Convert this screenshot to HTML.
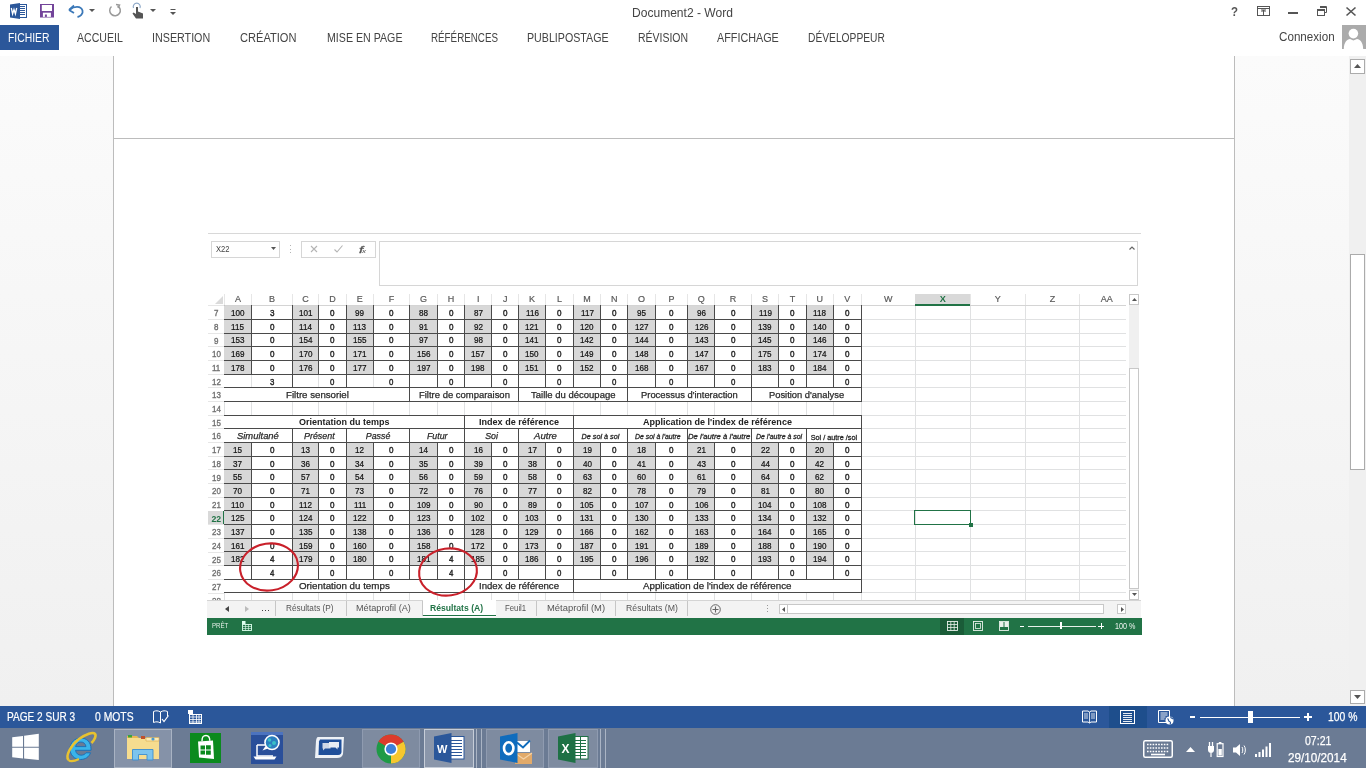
<!DOCTYPE html>
<html><head><meta charset="utf-8"><style>
html,body{margin:0;padding:0;}
body{width:1366px;height:768px;position:relative;overflow:hidden;background:#fff;font-family:"Liberation Sans",sans-serif;}
.a{position:absolute;}
.t{position:absolute;-webkit-font-smoothing:antialiased;white-space:nowrap;line-height:1;transform-origin:0 0;}
svg{position:absolute;overflow:visible;}
</style></head><body><div style="position:absolute;left:0;top:0;width:1366px;height:768px;will-change:transform;">
<div class="a" style="left:0;top:56px;width:1349px;height:650px;background:linear-gradient(#fbfbfb,#f0f0f0);"></div>
<div class="a" style="left:114.00px;top:56.00px;width:1120.00px;height:650.00px;background:#fff;"></div>
<div class="a" style="left:113.00px;top:56.00px;width:1.00px;height:650.00px;background:#bcbcbc;"></div>
<div class="a" style="left:1234.00px;top:56.00px;width:1.00px;height:650.00px;background:#bcbcbc;"></div>
<div class="a" style="left:113.00px;top:138.00px;width:1121.00px;height:1.00px;background:#bcbcbc;"></div>
<div class="a" style="left:0.00px;top:0.00px;width:1366.00px;height:56.00px;background:#fff;"></div>
<div class="t" style="left:631.50px;top:5.86px;font-size:13.04px;color:#444;transform:scaleX(0.9247);">Document2 - Word</div>
<div class="a" style="left:0.00px;top:25.00px;width:59.00px;height:25.00px;background:#2b579a;"></div>
<div class="t" style="left:8.30px;top:31.24px;font-size:13.19px;color:#fff;transform:scaleX(0.7867);">FICHIER</div>
<div class="t" style="left:76.50px;top:31.24px;font-size:13.19px;color:#444;transform:scaleX(0.8012);">ACCUEIL</div>
<div class="t" style="left:152.30px;top:31.24px;font-size:13.19px;color:#444;transform:scaleX(0.8132);">INSERTION</div>
<div class="t" style="left:240.10px;top:31.24px;font-size:13.19px;color:#444;transform:scaleX(0.8412);">CRÉATION</div>
<div class="t" style="left:326.50px;top:31.24px;font-size:13.19px;color:#444;transform:scaleX(0.8069);">MISE EN PAGE</div>
<div class="t" style="left:431.10px;top:31.24px;font-size:13.19px;color:#444;transform:scaleX(0.7433);">RÉFÉRENCES</div>
<div class="t" style="left:527.00px;top:31.24px;font-size:13.19px;color:#444;transform:scaleX(0.8087);">PUBLIPOSTAGE</div>
<div class="t" style="left:637.90px;top:31.24px;font-size:13.19px;color:#444;transform:scaleX(0.7949);">RÉVISION</div>
<div class="t" style="left:717.00px;top:31.24px;font-size:13.19px;color:#444;transform:scaleX(0.8188);">AFFICHAGE</div>
<div class="t" style="left:808.10px;top:31.24px;font-size:13.19px;color:#444;transform:scaleX(0.7772);">DÉVELOPPEUR</div>
<div class="t" style="left:1278.70px;top:30.49px;font-size:13.48px;color:#444;transform:scaleX(0.8643);">Connexion</div>
<svg style="left:1342px;top:25px" width="24" height="24" viewBox="0 0 24 24">
<rect x="0" y="0" width="24" height="24" fill="#ababab"/>
<circle cx="11.4" cy="8.6" r="4.8" fill="#fff"/>
<path d="M1.8 24 C2 17 5 14.5 8 14 L11.4 15.5 L15 14 C18 14.5 21 17 21.2 24 Z" fill="#fff"/>
</svg>
<svg style="left:10px;top:3px" width="17" height="16" viewBox="0 0 17 16" shape-rendering="crispEdges">
<rect x="8" y="1" width="8" height="13" fill="#fff" stroke="#2b579a" stroke-width="1"/>
<path d="M10 3.5H15M10 5.5H15M10 7.5H15M10 9.5H15M10 11.5H15" stroke="#2b579a" stroke-width="1"/>
<path d="M0 1.5 L10 0 V16 L0 14.5 Z" fill="#2b579a" shape-rendering="auto"/>
<path d="M1.3 5 L2.6 11 L4 6.5 L5.4 11 L6.7 5" fill="none" stroke="#fff" stroke-width="1.3" shape-rendering="auto"/>
</svg>
<svg style="left:40px;top:4px" width="14" height="14" viewBox="0 0 14 14">
<rect x="0" y="0" width="14" height="13.5" fill="#73449a"/>
<rect x="1.8" y="1" width="10.2" height="6" fill="#fff"/>
<rect x="2.9" y="8.7" width="8" height="4.2" fill="#fff"/>
<rect x="4.9" y="10.5" width="2" height="2.4" fill="#73449a"/>
</svg>
<svg style="left:68px;top:4px" width="17" height="14" viewBox="0 0 17 14">
<path d="M2 5.5 C6 2 13 1.5 14.5 6.5 C15.5 10 12 12.5 9.5 13" fill="none" stroke="#3b78b8" stroke-width="1.8"/>
<path d="M1 6 L6 1.5 M1 6 L6 9" fill="none" stroke="#3b78b8" stroke-width="1.8"/>
</svg>
<svg style="left:89px;top:9px" width="6" height="3" viewBox="0 0 6 3"><path d="M0 0H6L3 3Z" fill="#555"/></svg>
<svg style="left:108px;top:4px" width="14" height="13" viewBox="0 0 14 13">
<path d="M9.5 1.8 A5.3 5.3 0 1 1 3.5 2.5" fill="none" stroke="#9a9a9a" stroke-width="1.5"/>
<path d="M8 0.5 L11.5 1 L10 4" fill="none" stroke="#9a9a9a" stroke-width="1.5"/>
</svg>
<svg style="left:131px;top:3px" width="14" height="16" viewBox="0 0 14 16">
<path d="M2.5 5 A3.5 3.5 0 1 1 9 5" fill="none" stroke="#8fa9c8" stroke-width="1.2"/>
<path d="M5 4 V11 L2.5 9.5 L1.5 10.5 L5 15.5 H12 V10.5 L7 8.5 V4 Z" fill="#555"/>
</svg>
<svg style="left:150px;top:9px" width="6" height="3" viewBox="0 0 6 3"><path d="M0 0H6L3 3Z" fill="#555"/></svg>
<svg style="left:170px;top:9px" width="6" height="6" viewBox="0 0 6 6"><path d="M0.5 0.5H5.5" stroke="#555"/><path d="M0 3H6L3 6Z" fill="#555"/></svg>
<div class="t" style="left:1231.00px;top:4.76px;font-size:13.04px;color:#555;font-weight:bold;transform:scaleX(0.8785);">?</div>
<svg style="left:1257px;top:6px" width="13" height="10" viewBox="0 0 13 10">
<rect x="0.5" y="0.5" width="12" height="9" fill="none" stroke="#555" stroke-width="1"/>
<path d="M0.5 2.5H12.5" stroke="#555"/>
<path d="M6.5 4V9 M4.5 6L6.5 4L8.5 6" fill="none" stroke="#555"/>
<path d="M4 4H9" stroke="#555"/>
</svg>
<div class="a" style="left:1288.00px;top:12.00px;width:9.50px;height:2.00px;background:#555;"></div>
<svg style="left:1317px;top:6px" width="10" height="10" viewBox="0 0 10 10">
<path d="M3 0.5H9.5V6.5H8" fill="none" stroke="#555"/>
<rect x="0.5" y="3.5" width="7" height="6" fill="none" stroke="#555"/>
<path d="M0.5 4.5H7.5M3 1.5H9.5" stroke="#555"/>
</svg>
<svg style="left:1346px;top:6.5px" width="10" height="9" viewBox="0 0 10 9">
<path d="M0.5 0.5L9.5 8.5M9.5 0.5L0.5 8.5" stroke="#555" stroke-width="1.6"/>
</svg>
<div class="a" style="left:1349.00px;top:56.00px;width:17.00px;height:650.00px;background:#f0f0f0;"></div>
<div class="a" style="left:1350.00px;top:59.00px;width:15.00px;height:15.00px;background:#fff;border:1px solid #ababab;box-sizing:border-box;"></div>
<svg style="left:1354px;top:64px" width="7" height="4" viewBox="0 0 7 4"><path d="M0 4H7L3.5 0Z" fill="#555"/></svg>
<div class="a" style="left:1350.00px;top:254.00px;width:15.00px;height:216.00px;background:#fff;border:1px solid #ababab;box-sizing:border-box;"></div>
<div class="a" style="left:1350.00px;top:690.00px;width:15.00px;height:14.00px;background:#fff;border:1px solid #ababab;box-sizing:border-box;"></div>
<svg style="left:1354px;top:695px" width="7" height="4" viewBox="0 0 7 4"><path d="M0 0H7L3.5 4Z" fill="#555"/></svg>
<div class="a" style="left:0.00px;top:706.00px;width:1366.00px;height:22.00px;background:#2b579a;"></div>
<div class="t" style="left:7.30px;top:710.73px;font-size:12.61px;color:#fff;transform:scaleX(0.7999);-webkit-text-stroke:0.2px #fff;">PAGE 2 SUR 3</div>
<div class="t" style="left:95.20px;top:710.73px;font-size:12.61px;color:#fff;transform:scaleX(0.8223);-webkit-text-stroke:0.2px #fff;">0 MOTS</div>
<svg style="left:153px;top:710px" width="16" height="14" viewBox="0 0 16 14">
<path d="M0.5 1.5 C3 0.5 5 0.5 7.5 2 V13 C5 11.5 3 11.5 0.5 12.5 Z" fill="none" stroke="#fff"/>
<path d="M7.5 2 C10 0.5 12 0.5 14.5 1.5 V6" fill="none" stroke="#fff"/>
<path d="M9 9 L11 11.5 L15.5 5.5" fill="none" stroke="#fff" stroke-width="1.2"/>
</svg>
<svg style="left:188px;top:710px" width="14" height="14" viewBox="0 0 14 14">
<rect x="0" y="0" width="5" height="4" fill="#fff"/>
<rect x="1.5" y="4.5" width="12" height="9" fill="none" stroke="#fff"/>
<path d="M1.5 7H13.5M1.5 9.5H13.5M1.5 12H13.5M5 4.5V13.5M8.5 4.5V13.5M11 4.5V13.5" stroke="#fff" stroke-width="0.8"/>
</svg>
<svg style="left:1082px;top:710px" width="15" height="14" viewBox="0 0 15 14">
<path d="M0.5 1 H6 L7.5 2 L9 1 H14.5 V12 H9 L7.5 13 L6 12 H0.5 Z" fill="none" stroke="#fff"/>
<path d="M7.5 2V13 M2 4H6M2 6H6M2 8H6M9 4H13M9 6H13M9 8H13" stroke="#fff" stroke-width="0.8"/>
</svg>
<div class="a" style="left:1109.00px;top:706.00px;width:38.00px;height:22.00px;background:#1e4e8c;"></div>
<svg style="left:1120px;top:710px" width="15" height="14" viewBox="0 0 15 14">
<rect x="0.5" y="0.5" width="14" height="13" fill="none" stroke="#fff"/>
<path d="M3 3.5H12M3 5.5H12M3 7.5H12M3 9.5H12M3 11.5H12" stroke="#fff" stroke-width="0.9"/>
</svg>
<svg style="left:1158px;top:710px" width="16" height="15" viewBox="0 0 16 15">
<path d="M9 12.5H0.5V0.5H11.5V7" fill="none" stroke="#fff"/>
<path d="M2.5 3H9.5M2.5 5H9.5M2.5 7H7.5M2.5 9H6.5" stroke="#fff" stroke-width="0.9"/>
<circle cx="11.5" cy="10.5" r="4" fill="#fff"/>
<path d="M9.5 8.5 C11 9.5 10 11 11.5 11.5 C13 12 12.5 13.5 12 14.3 M12.5 6.8 C12.5 8 13.8 8.5 15.2 9" fill="none" stroke="#2b579a" stroke-width="1.1"/>
</svg>
<div class="a" style="left:1190.00px;top:716.00px;width:5.00px;height:2.00px;background:#fff;"></div>
<div class="a" style="left:1200.00px;top:716.50px;width:100.00px;height:1.00px;background:#fff;"></div>
<div class="a" style="left:1247.50px;top:711.00px;width:5.00px;height:12.00px;background:#fff;"></div>
<div class="a" style="left:1304.00px;top:716.00px;width:8.00px;height:2.00px;background:#fff;"></div>
<div class="a" style="left:1307.00px;top:713.00px;width:2.00px;height:8.00px;background:#fff;"></div>
<div class="t" style="left:1327.60px;top:710.73px;font-size:12.61px;color:#fff;transform:scaleX(0.8223);-webkit-text-stroke:0.25px #fff;">100 %</div>
<div class="a" style="left:0.00px;top:728.00px;width:1366.00px;height:40.00px;background:#6b7b94;"></div>
<div class="a" style="left:208.00px;top:233.00px;width:933.00px;height:1.00px;background:#d8d8d8;"></div>
<div class="a" style="left:210.50px;top:240.50px;width:69.50px;height:17.50px;background:#fff;border:1px solid #d6d6d6;box-sizing:border-box;"></div>
<div class="t" style="left:215.60px;top:244.99px;font-size:8.99px;color:#444;transform:scaleX(0.8444);">X22</div>
<svg style="left:271px;top:247px" width="5" height="3" viewBox="0 0 5 3"><path d="M0 0H5L2.5 3Z" fill="#555"/></svg>
<div class="a" style="left:289.50px;top:245.00px;width:1.20px;height:1.20px;background:#b4b4b4;"></div>
<div class="a" style="left:289.50px;top:248.50px;width:1.20px;height:1.20px;background:#b4b4b4;"></div>
<div class="a" style="left:289.50px;top:252.00px;width:1.20px;height:1.20px;background:#b4b4b4;"></div>
<div class="a" style="left:301.00px;top:240.50px;width:75.00px;height:17.50px;background:#fff;border:1px solid #d6d6d6;box-sizing:border-box;"></div>
<svg style="left:310px;top:245px" width="8" height="8" viewBox="0 0 8 8"><path d="M1 1L7 7M7 1L1 7" stroke="#b4b4b4" stroke-width="1.1"/></svg>
<svg style="left:334px;top:245px" width="9" height="8" viewBox="0 0 9 8"><path d="M0.5 4.5L3 7L8.5 0.5" fill="none" stroke="#b4b4b4" stroke-width="1.1"/></svg>
<div class="t" style="left:358.60px;top:245.16px;font-size:9.86px;color:#555;font-style:italic;transform:scaleX(1.5340);-webkit-text-stroke:0.3px #555;">f</div>
<div class="t" style="left:362.20px;top:248.59px;font-size:5.80px;color:#444;font-style:italic;transform:scaleX(1.3800);">x</div>
<div class="a" style="left:378.50px;top:240.50px;width:759.50px;height:45.00px;background:#fff;border:1px solid #d6d6d6;box-sizing:border-box;"></div>
<svg style="left:1129px;top:246px" width="6" height="4" viewBox="0 0 6 4"><path d="M0.5 3.5L3 1L5.5 3.5" fill="none" stroke="#666" stroke-width="1.2"/></svg>
<div class="a" style="left:208px;top:288px;width:918.30px;height:311.80px;overflow:hidden;">
<div class="a" style="left:-208px;top:-288px;width:1366px;height:768px;">
<div class="a" style="left:224.30px;top:305.20px;width:902.00px;height:1.00px;background:#e0e1e2;"></div>
<div class="a" style="left:224.30px;top:318.88px;width:902.00px;height:1.00px;background:#e0e1e2;"></div>
<div class="a" style="left:224.30px;top:332.56px;width:902.00px;height:1.00px;background:#e0e1e2;"></div>
<div class="a" style="left:224.30px;top:346.24px;width:902.00px;height:1.00px;background:#e0e1e2;"></div>
<div class="a" style="left:224.30px;top:359.92px;width:902.00px;height:1.00px;background:#e0e1e2;"></div>
<div class="a" style="left:224.30px;top:373.60px;width:902.00px;height:1.00px;background:#e0e1e2;"></div>
<div class="a" style="left:224.30px;top:387.28px;width:902.00px;height:1.00px;background:#e0e1e2;"></div>
<div class="a" style="left:224.30px;top:400.96px;width:902.00px;height:1.00px;background:#e0e1e2;"></div>
<div class="a" style="left:224.30px;top:414.64px;width:902.00px;height:1.00px;background:#e0e1e2;"></div>
<div class="a" style="left:224.30px;top:428.32px;width:902.00px;height:1.00px;background:#e0e1e2;"></div>
<div class="a" style="left:224.30px;top:442.00px;width:902.00px;height:1.00px;background:#e0e1e2;"></div>
<div class="a" style="left:224.30px;top:455.68px;width:902.00px;height:1.00px;background:#e0e1e2;"></div>
<div class="a" style="left:224.30px;top:469.36px;width:902.00px;height:1.00px;background:#e0e1e2;"></div>
<div class="a" style="left:224.30px;top:483.04px;width:902.00px;height:1.00px;background:#e0e1e2;"></div>
<div class="a" style="left:224.30px;top:496.72px;width:902.00px;height:1.00px;background:#e0e1e2;"></div>
<div class="a" style="left:224.30px;top:510.40px;width:902.00px;height:1.00px;background:#e0e1e2;"></div>
<div class="a" style="left:224.30px;top:524.08px;width:902.00px;height:1.00px;background:#e0e1e2;"></div>
<div class="a" style="left:224.30px;top:537.76px;width:902.00px;height:1.00px;background:#e0e1e2;"></div>
<div class="a" style="left:224.30px;top:551.44px;width:902.00px;height:1.00px;background:#e0e1e2;"></div>
<div class="a" style="left:224.30px;top:565.12px;width:902.00px;height:1.00px;background:#e0e1e2;"></div>
<div class="a" style="left:224.30px;top:578.80px;width:902.00px;height:1.00px;background:#e0e1e2;"></div>
<div class="a" style="left:224.30px;top:592.48px;width:902.00px;height:1.00px;background:#e0e1e2;"></div>
<div class="a" style="left:224.30px;top:606.16px;width:902.00px;height:1.00px;background:#e0e1e2;"></div>
<div class="a" style="left:223.80px;top:293.50px;width:1.00px;height:306.30px;background:#e0e1e2;"></div>
<div class="a" style="left:251.00px;top:293.50px;width:1.00px;height:306.30px;background:#e0e1e2;"></div>
<div class="a" style="left:291.80px;top:293.50px;width:1.00px;height:306.30px;background:#e0e1e2;"></div>
<div class="a" style="left:318.30px;top:293.50px;width:1.00px;height:306.30px;background:#e0e1e2;"></div>
<div class="a" style="left:345.90px;top:293.50px;width:1.00px;height:306.30px;background:#e0e1e2;"></div>
<div class="a" style="left:372.50px;top:293.50px;width:1.00px;height:306.30px;background:#e0e1e2;"></div>
<div class="a" style="left:409.30px;top:293.50px;width:1.00px;height:306.30px;background:#e0e1e2;"></div>
<div class="a" style="left:436.70px;top:293.50px;width:1.00px;height:306.30px;background:#e0e1e2;"></div>
<div class="a" style="left:464.10px;top:293.50px;width:1.00px;height:306.30px;background:#e0e1e2;"></div>
<div class="a" style="left:491.20px;top:293.50px;width:1.00px;height:306.30px;background:#e0e1e2;"></div>
<div class="a" style="left:518.10px;top:293.50px;width:1.00px;height:306.30px;background:#e0e1e2;"></div>
<div class="a" style="left:545.10px;top:293.50px;width:1.00px;height:306.30px;background:#e0e1e2;"></div>
<div class="a" style="left:572.80px;top:293.50px;width:1.00px;height:306.30px;background:#e0e1e2;"></div>
<div class="a" style="left:600.20px;top:293.50px;width:1.00px;height:306.30px;background:#e0e1e2;"></div>
<div class="a" style="left:627.10px;top:293.50px;width:1.00px;height:306.30px;background:#e0e1e2;"></div>
<div class="a" style="left:654.80px;top:293.50px;width:1.00px;height:306.30px;background:#e0e1e2;"></div>
<div class="a" style="left:687.30px;top:293.50px;width:1.00px;height:306.30px;background:#e0e1e2;"></div>
<div class="a" style="left:714.20px;top:293.50px;width:1.00px;height:306.30px;background:#e0e1e2;"></div>
<div class="a" style="left:750.90px;top:293.50px;width:1.00px;height:306.30px;background:#e0e1e2;"></div>
<div class="a" style="left:778.30px;top:293.50px;width:1.00px;height:306.30px;background:#e0e1e2;"></div>
<div class="a" style="left:805.70px;top:293.50px;width:1.00px;height:306.30px;background:#e0e1e2;"></div>
<div class="a" style="left:832.90px;top:293.50px;width:1.00px;height:306.30px;background:#e0e1e2;"></div>
<div class="a" style="left:860.80px;top:293.50px;width:1.00px;height:306.30px;background:#e0e1e2;"></div>
<div class="a" style="left:914.70px;top:293.50px;width:1.00px;height:306.30px;background:#e0e1e2;"></div>
<div class="a" style="left:969.90px;top:293.50px;width:1.00px;height:306.30px;background:#e0e1e2;"></div>
<div class="a" style="left:1024.80px;top:293.50px;width:1.00px;height:306.30px;background:#e0e1e2;"></div>
<div class="a" style="left:1079.00px;top:293.50px;width:1.00px;height:306.30px;background:#e0e1e2;"></div>
<div class="a" style="left:1133.50px;top:293.50px;width:1.00px;height:306.30px;background:#e0e1e2;"></div>
<div class="a" style="left:208.00px;top:293.50px;width:918.30px;height:11.90px;background:#fff;"></div>
<div class="a" style="left:223.80px;top:293.50px;width:1.00px;height:11.90px;background:#e6e6e6;"></div>
<div class="a" style="left:251.00px;top:293.50px;width:1.00px;height:11.90px;background:#e6e6e6;"></div>
<div class="a" style="left:291.80px;top:293.50px;width:1.00px;height:11.90px;background:#e6e6e6;"></div>
<div class="a" style="left:318.30px;top:293.50px;width:1.00px;height:11.90px;background:#e6e6e6;"></div>
<div class="a" style="left:345.90px;top:293.50px;width:1.00px;height:11.90px;background:#e6e6e6;"></div>
<div class="a" style="left:372.50px;top:293.50px;width:1.00px;height:11.90px;background:#e6e6e6;"></div>
<div class="a" style="left:409.30px;top:293.50px;width:1.00px;height:11.90px;background:#e6e6e6;"></div>
<div class="a" style="left:436.70px;top:293.50px;width:1.00px;height:11.90px;background:#e6e6e6;"></div>
<div class="a" style="left:464.10px;top:293.50px;width:1.00px;height:11.90px;background:#e6e6e6;"></div>
<div class="a" style="left:491.20px;top:293.50px;width:1.00px;height:11.90px;background:#e6e6e6;"></div>
<div class="a" style="left:518.10px;top:293.50px;width:1.00px;height:11.90px;background:#e6e6e6;"></div>
<div class="a" style="left:545.10px;top:293.50px;width:1.00px;height:11.90px;background:#e6e6e6;"></div>
<div class="a" style="left:572.80px;top:293.50px;width:1.00px;height:11.90px;background:#e6e6e6;"></div>
<div class="a" style="left:600.20px;top:293.50px;width:1.00px;height:11.90px;background:#e6e6e6;"></div>
<div class="a" style="left:627.10px;top:293.50px;width:1.00px;height:11.90px;background:#e6e6e6;"></div>
<div class="a" style="left:654.80px;top:293.50px;width:1.00px;height:11.90px;background:#e6e6e6;"></div>
<div class="a" style="left:687.30px;top:293.50px;width:1.00px;height:11.90px;background:#e6e6e6;"></div>
<div class="a" style="left:714.20px;top:293.50px;width:1.00px;height:11.90px;background:#e6e6e6;"></div>
<div class="a" style="left:750.90px;top:293.50px;width:1.00px;height:11.90px;background:#e6e6e6;"></div>
<div class="a" style="left:778.30px;top:293.50px;width:1.00px;height:11.90px;background:#e6e6e6;"></div>
<div class="a" style="left:805.70px;top:293.50px;width:1.00px;height:11.90px;background:#e6e6e6;"></div>
<div class="a" style="left:832.90px;top:293.50px;width:1.00px;height:11.90px;background:#e6e6e6;"></div>
<div class="a" style="left:860.80px;top:293.50px;width:1.00px;height:11.90px;background:#e6e6e6;"></div>
<div class="a" style="left:914.70px;top:293.50px;width:1.00px;height:11.90px;background:#e6e6e6;"></div>
<div class="a" style="left:969.90px;top:293.50px;width:1.00px;height:11.90px;background:#e6e6e6;"></div>
<div class="a" style="left:1024.80px;top:293.50px;width:1.00px;height:11.90px;background:#e6e6e6;"></div>
<div class="a" style="left:1079.00px;top:293.50px;width:1.00px;height:11.90px;background:#e6e6e6;"></div>
<div class="a" style="left:208.00px;top:305.00px;width:918.30px;height:0.80px;background:#d4d4d4;"></div>
<svg style="left:214.5px;top:296px" width="8" height="8" viewBox="0 0 8 8"><path d="M8 0V8H0Z" fill="#dadada"/></svg>
<div class="a" style="left:915.20px;top:293.50px;width:55.20px;height:11.90px;background:#d9d9d9;"></div>
<div class="a" style="left:915.20px;top:304.20px;width:55.20px;height:1.40px;background:#217346;"></div>
<div class="t" style="left:234.90px;top:294.79px;font-size:8.99px;color:#5a5a5a;-webkit-text-stroke:0.2px #5a5a5a;">A</div>
<div class="t" style="left:268.90px;top:294.79px;font-size:8.99px;color:#5a5a5a;-webkit-text-stroke:0.2px #5a5a5a;">B</div>
<div class="t" style="left:302.31px;top:294.79px;font-size:8.99px;color:#5a5a5a;-webkit-text-stroke:0.2px #5a5a5a;">C</div>
<div class="t" style="left:329.36px;top:294.79px;font-size:8.99px;color:#5a5a5a;-webkit-text-stroke:0.2px #5a5a5a;">D</div>
<div class="t" style="left:356.70px;top:294.79px;font-size:8.99px;color:#5a5a5a;-webkit-text-stroke:0.2px #5a5a5a;">E</div>
<div class="t" style="left:388.66px;top:294.79px;font-size:8.99px;color:#5a5a5a;-webkit-text-stroke:0.2px #5a5a5a;">F</div>
<div class="t" style="left:420.01px;top:294.79px;font-size:8.99px;color:#5a5a5a;-webkit-text-stroke:0.2px #5a5a5a;">G</div>
<div class="t" style="left:447.66px;top:294.79px;font-size:8.99px;color:#5a5a5a;-webkit-text-stroke:0.2px #5a5a5a;">H</div>
<div class="t" style="left:476.90px;top:294.79px;font-size:8.99px;color:#5a5a5a;-webkit-text-stroke:0.2px #5a5a5a;">I</div>
<div class="t" style="left:502.90px;top:294.79px;font-size:8.99px;color:#5a5a5a;-webkit-text-stroke:0.2px #5a5a5a;">J</div>
<div class="t" style="left:529.10px;top:294.79px;font-size:8.99px;color:#5a5a5a;-webkit-text-stroke:0.2px #5a5a5a;">K</div>
<div class="t" style="left:556.95px;top:294.79px;font-size:8.99px;color:#5a5a5a;-webkit-text-stroke:0.2px #5a5a5a;">L</div>
<div class="t" style="left:583.26px;top:294.79px;font-size:8.99px;color:#5a5a5a;-webkit-text-stroke:0.2px #5a5a5a;">M</div>
<div class="t" style="left:610.91px;top:294.79px;font-size:8.99px;color:#5a5a5a;-webkit-text-stroke:0.2px #5a5a5a;">N</div>
<div class="t" style="left:637.96px;top:294.79px;font-size:8.99px;color:#5a5a5a;-webkit-text-stroke:0.2px #5a5a5a;">O</div>
<div class="t" style="left:668.55px;top:294.79px;font-size:8.99px;color:#5a5a5a;-webkit-text-stroke:0.2px #5a5a5a;">P</div>
<div class="t" style="left:697.76px;top:294.79px;font-size:8.99px;color:#5a5a5a;-webkit-text-stroke:0.2px #5a5a5a;">Q</div>
<div class="t" style="left:729.81px;top:294.79px;font-size:8.99px;color:#5a5a5a;-webkit-text-stroke:0.2px #5a5a5a;">R</div>
<div class="t" style="left:762.10px;top:294.79px;font-size:8.99px;color:#5a5a5a;-webkit-text-stroke:0.2px #5a5a5a;">S</div>
<div class="t" style="left:789.76px;top:294.79px;font-size:8.99px;color:#5a5a5a;-webkit-text-stroke:0.2px #5a5a5a;">T</div>
<div class="t" style="left:816.56px;top:294.79px;font-size:8.99px;color:#5a5a5a;-webkit-text-stroke:0.2px #5a5a5a;">U</div>
<div class="t" style="left:844.35px;top:294.79px;font-size:8.99px;color:#5a5a5a;-webkit-text-stroke:0.2px #5a5a5a;">V</div>
<div class="t" style="left:884.01px;top:294.79px;font-size:8.99px;color:#5a5a5a;-webkit-text-stroke:0.2px #5a5a5a;">W</div>
<div class="t" style="left:939.75px;top:294.67px;font-size:9.13px;color:#217346;font-weight:bold;">X</div>
<div class="t" style="left:994.85px;top:294.79px;font-size:8.99px;color:#5a5a5a;-webkit-text-stroke:0.2px #5a5a5a;">Y</div>
<div class="t" style="left:1049.66px;top:294.79px;font-size:8.99px;color:#5a5a5a;-webkit-text-stroke:0.2px #5a5a5a;">Z</div>
<div class="t" style="left:1100.76px;top:294.79px;font-size:8.99px;color:#5a5a5a;-webkit-text-stroke:0.2px #5a5a5a;">AA</div>
<div class="a" style="left:208.00px;top:305.40px;width:16.30px;height:294.40px;background:#fff;"></div>
<div class="a" style="left:224.00px;top:305.40px;width:1.00px;height:294.40px;background:#c4c4c4;"></div>
<div class="a" style="left:208.00px;top:305.30px;width:16.30px;height:0.80px;background:#e6e6e6;"></div>
<div class="t" style="left:214.08px;top:309.34px;font-size:8.70px;color:#707070;transform:scaleX(0.9200);-webkit-text-stroke:0.35px #707070;">7</div>
<div class="a" style="left:208.00px;top:318.98px;width:16.30px;height:0.80px;background:#e6e6e6;"></div>
<div class="t" style="left:214.08px;top:323.02px;font-size:8.70px;color:#707070;transform:scaleX(0.9200);-webkit-text-stroke:0.35px #707070;">8</div>
<div class="a" style="left:208.00px;top:332.66px;width:16.30px;height:0.80px;background:#e6e6e6;"></div>
<div class="t" style="left:214.08px;top:336.70px;font-size:8.70px;color:#707070;transform:scaleX(0.9200);-webkit-text-stroke:0.35px #707070;">9</div>
<div class="a" style="left:208.00px;top:346.34px;width:16.30px;height:0.80px;background:#e6e6e6;"></div>
<div class="t" style="left:211.85px;top:350.38px;font-size:8.70px;color:#707070;transform:scaleX(0.9200);-webkit-text-stroke:0.35px #707070;">10</div>
<div class="a" style="left:208.00px;top:360.02px;width:16.30px;height:0.80px;background:#e6e6e6;"></div>
<div class="t" style="left:212.15px;top:364.06px;font-size:8.70px;color:#707070;transform:scaleX(0.9200);-webkit-text-stroke:0.35px #707070;">11</div>
<div class="a" style="left:208.00px;top:373.70px;width:16.30px;height:0.80px;background:#e6e6e6;"></div>
<div class="t" style="left:211.85px;top:377.74px;font-size:8.70px;color:#707070;transform:scaleX(0.9200);-webkit-text-stroke:0.35px #707070;">12</div>
<div class="a" style="left:208.00px;top:387.38px;width:16.30px;height:0.80px;background:#e6e6e6;"></div>
<div class="t" style="left:211.85px;top:391.42px;font-size:8.70px;color:#707070;transform:scaleX(0.9200);-webkit-text-stroke:0.35px #707070;">13</div>
<div class="a" style="left:208.00px;top:401.06px;width:16.30px;height:0.80px;background:#e6e6e6;"></div>
<div class="t" style="left:211.85px;top:405.10px;font-size:8.70px;color:#707070;transform:scaleX(0.9200);-webkit-text-stroke:0.35px #707070;">14</div>
<div class="a" style="left:208.00px;top:414.74px;width:16.30px;height:0.80px;background:#e6e6e6;"></div>
<div class="t" style="left:211.85px;top:418.78px;font-size:8.70px;color:#707070;transform:scaleX(0.9200);-webkit-text-stroke:0.35px #707070;">15</div>
<div class="a" style="left:208.00px;top:428.42px;width:16.30px;height:0.80px;background:#e6e6e6;"></div>
<div class="t" style="left:211.85px;top:432.46px;font-size:8.70px;color:#707070;transform:scaleX(0.9200);-webkit-text-stroke:0.35px #707070;">16</div>
<div class="a" style="left:208.00px;top:442.10px;width:16.30px;height:0.80px;background:#e6e6e6;"></div>
<div class="t" style="left:211.85px;top:446.14px;font-size:8.70px;color:#707070;transform:scaleX(0.9200);-webkit-text-stroke:0.35px #707070;">17</div>
<div class="a" style="left:208.00px;top:455.78px;width:16.30px;height:0.80px;background:#e6e6e6;"></div>
<div class="t" style="left:211.85px;top:459.82px;font-size:8.70px;color:#707070;transform:scaleX(0.9200);-webkit-text-stroke:0.35px #707070;">18</div>
<div class="a" style="left:208.00px;top:469.46px;width:16.30px;height:0.80px;background:#e6e6e6;"></div>
<div class="t" style="left:211.85px;top:473.50px;font-size:8.70px;color:#707070;transform:scaleX(0.9200);-webkit-text-stroke:0.35px #707070;">19</div>
<div class="a" style="left:208.00px;top:483.14px;width:16.30px;height:0.80px;background:#e6e6e6;"></div>
<div class="t" style="left:211.85px;top:487.18px;font-size:8.70px;color:#707070;transform:scaleX(0.9200);-webkit-text-stroke:0.35px #707070;">20</div>
<div class="a" style="left:208.00px;top:496.82px;width:16.30px;height:0.80px;background:#e6e6e6;"></div>
<div class="t" style="left:211.85px;top:500.86px;font-size:8.70px;color:#707070;transform:scaleX(0.9200);-webkit-text-stroke:0.35px #707070;">21</div>
<div class="a" style="left:208.00px;top:510.50px;width:16.30px;height:0.80px;background:#e6e6e6;"></div>
<div class="a" style="left:208.00px;top:510.90px;width:16.30px;height:13.68px;background:#d9d9d9;"></div>
<div class="a" style="left:223.00px;top:510.90px;width:1.60px;height:13.68px;background:#217346;"></div>
<div class="t" style="left:211.46px;top:514.54px;font-size:8.70px;color:#217346;font-weight:bold;">22</div>
<div class="a" style="left:208.00px;top:524.18px;width:16.30px;height:0.80px;background:#e6e6e6;"></div>
<div class="t" style="left:211.85px;top:528.22px;font-size:8.70px;color:#707070;transform:scaleX(0.9200);-webkit-text-stroke:0.35px #707070;">23</div>
<div class="a" style="left:208.00px;top:537.86px;width:16.30px;height:0.80px;background:#e6e6e6;"></div>
<div class="t" style="left:211.85px;top:541.90px;font-size:8.70px;color:#707070;transform:scaleX(0.9200);-webkit-text-stroke:0.35px #707070;">24</div>
<div class="a" style="left:208.00px;top:551.54px;width:16.30px;height:0.80px;background:#e6e6e6;"></div>
<div class="t" style="left:211.85px;top:555.58px;font-size:8.70px;color:#707070;transform:scaleX(0.9200);-webkit-text-stroke:0.35px #707070;">25</div>
<div class="a" style="left:208.00px;top:565.22px;width:16.30px;height:0.80px;background:#e6e6e6;"></div>
<div class="t" style="left:211.85px;top:569.26px;font-size:8.70px;color:#707070;transform:scaleX(0.9200);-webkit-text-stroke:0.35px #707070;">26</div>
<div class="a" style="left:208.00px;top:578.90px;width:16.30px;height:0.80px;background:#e6e6e6;"></div>
<div class="t" style="left:211.85px;top:582.94px;font-size:8.70px;color:#707070;transform:scaleX(0.9200);-webkit-text-stroke:0.35px #707070;">27</div>
<div class="a" style="left:208.00px;top:592.58px;width:16.30px;height:0.80px;background:#e6e6e6;"></div>
<div class="t" style="left:211.85px;top:596.62px;font-size:8.70px;color:#707070;transform:scaleX(0.9200);-webkit-text-stroke:0.35px #707070;">28</div>
<div class="a" style="left:224.30px;top:305.70px;width:637.00px;height:287.28px;background:#fff;"></div>
<div class="a" style="left:224.30px;top:305.70px;width:27.20px;height:13.68px;background:#d8d8d8;"></div>
<div class="a" style="left:292.30px;top:305.70px;width:26.50px;height:13.68px;background:#d8d8d8;"></div>
<div class="a" style="left:346.40px;top:305.70px;width:26.60px;height:13.68px;background:#d8d8d8;"></div>
<div class="a" style="left:409.80px;top:305.70px;width:27.40px;height:13.68px;background:#d8d8d8;"></div>
<div class="a" style="left:464.60px;top:305.70px;width:27.10px;height:13.68px;background:#d8d8d8;"></div>
<div class="a" style="left:518.60px;top:305.70px;width:27.00px;height:13.68px;background:#d8d8d8;"></div>
<div class="a" style="left:573.30px;top:305.70px;width:27.40px;height:13.68px;background:#d8d8d8;"></div>
<div class="a" style="left:627.60px;top:305.70px;width:27.70px;height:13.68px;background:#d8d8d8;"></div>
<div class="a" style="left:687.80px;top:305.70px;width:26.90px;height:13.68px;background:#d8d8d8;"></div>
<div class="a" style="left:751.40px;top:305.70px;width:27.40px;height:13.68px;background:#d8d8d8;"></div>
<div class="a" style="left:806.20px;top:305.70px;width:27.20px;height:13.68px;background:#d8d8d8;"></div>
<div class="a" style="left:224.30px;top:319.38px;width:27.20px;height:13.68px;background:#d8d8d8;"></div>
<div class="a" style="left:292.30px;top:319.38px;width:26.50px;height:13.68px;background:#d8d8d8;"></div>
<div class="a" style="left:346.40px;top:319.38px;width:26.60px;height:13.68px;background:#d8d8d8;"></div>
<div class="a" style="left:409.80px;top:319.38px;width:27.40px;height:13.68px;background:#d8d8d8;"></div>
<div class="a" style="left:464.60px;top:319.38px;width:27.10px;height:13.68px;background:#d8d8d8;"></div>
<div class="a" style="left:518.60px;top:319.38px;width:27.00px;height:13.68px;background:#d8d8d8;"></div>
<div class="a" style="left:573.30px;top:319.38px;width:27.40px;height:13.68px;background:#d8d8d8;"></div>
<div class="a" style="left:627.60px;top:319.38px;width:27.70px;height:13.68px;background:#d8d8d8;"></div>
<div class="a" style="left:687.80px;top:319.38px;width:26.90px;height:13.68px;background:#d8d8d8;"></div>
<div class="a" style="left:751.40px;top:319.38px;width:27.40px;height:13.68px;background:#d8d8d8;"></div>
<div class="a" style="left:806.20px;top:319.38px;width:27.20px;height:13.68px;background:#d8d8d8;"></div>
<div class="a" style="left:224.30px;top:333.06px;width:27.20px;height:13.68px;background:#d8d8d8;"></div>
<div class="a" style="left:292.30px;top:333.06px;width:26.50px;height:13.68px;background:#d8d8d8;"></div>
<div class="a" style="left:346.40px;top:333.06px;width:26.60px;height:13.68px;background:#d8d8d8;"></div>
<div class="a" style="left:409.80px;top:333.06px;width:27.40px;height:13.68px;background:#d8d8d8;"></div>
<div class="a" style="left:464.60px;top:333.06px;width:27.10px;height:13.68px;background:#d8d8d8;"></div>
<div class="a" style="left:518.60px;top:333.06px;width:27.00px;height:13.68px;background:#d8d8d8;"></div>
<div class="a" style="left:573.30px;top:333.06px;width:27.40px;height:13.68px;background:#d8d8d8;"></div>
<div class="a" style="left:627.60px;top:333.06px;width:27.70px;height:13.68px;background:#d8d8d8;"></div>
<div class="a" style="left:687.80px;top:333.06px;width:26.90px;height:13.68px;background:#d8d8d8;"></div>
<div class="a" style="left:751.40px;top:333.06px;width:27.40px;height:13.68px;background:#d8d8d8;"></div>
<div class="a" style="left:806.20px;top:333.06px;width:27.20px;height:13.68px;background:#d8d8d8;"></div>
<div class="a" style="left:224.30px;top:346.74px;width:27.20px;height:13.68px;background:#d8d8d8;"></div>
<div class="a" style="left:292.30px;top:346.74px;width:26.50px;height:13.68px;background:#d8d8d8;"></div>
<div class="a" style="left:346.40px;top:346.74px;width:26.60px;height:13.68px;background:#d8d8d8;"></div>
<div class="a" style="left:409.80px;top:346.74px;width:27.40px;height:13.68px;background:#d8d8d8;"></div>
<div class="a" style="left:464.60px;top:346.74px;width:27.10px;height:13.68px;background:#d8d8d8;"></div>
<div class="a" style="left:518.60px;top:346.74px;width:27.00px;height:13.68px;background:#d8d8d8;"></div>
<div class="a" style="left:573.30px;top:346.74px;width:27.40px;height:13.68px;background:#d8d8d8;"></div>
<div class="a" style="left:627.60px;top:346.74px;width:27.70px;height:13.68px;background:#d8d8d8;"></div>
<div class="a" style="left:687.80px;top:346.74px;width:26.90px;height:13.68px;background:#d8d8d8;"></div>
<div class="a" style="left:751.40px;top:346.74px;width:27.40px;height:13.68px;background:#d8d8d8;"></div>
<div class="a" style="left:806.20px;top:346.74px;width:27.20px;height:13.68px;background:#d8d8d8;"></div>
<div class="a" style="left:224.30px;top:360.42px;width:27.20px;height:13.68px;background:#d8d8d8;"></div>
<div class="a" style="left:292.30px;top:360.42px;width:26.50px;height:13.68px;background:#d8d8d8;"></div>
<div class="a" style="left:346.40px;top:360.42px;width:26.60px;height:13.68px;background:#d8d8d8;"></div>
<div class="a" style="left:409.80px;top:360.42px;width:27.40px;height:13.68px;background:#d8d8d8;"></div>
<div class="a" style="left:464.60px;top:360.42px;width:27.10px;height:13.68px;background:#d8d8d8;"></div>
<div class="a" style="left:518.60px;top:360.42px;width:27.00px;height:13.68px;background:#d8d8d8;"></div>
<div class="a" style="left:573.30px;top:360.42px;width:27.40px;height:13.68px;background:#d8d8d8;"></div>
<div class="a" style="left:627.60px;top:360.42px;width:27.70px;height:13.68px;background:#d8d8d8;"></div>
<div class="a" style="left:687.80px;top:360.42px;width:26.90px;height:13.68px;background:#d8d8d8;"></div>
<div class="a" style="left:751.40px;top:360.42px;width:27.40px;height:13.68px;background:#d8d8d8;"></div>
<div class="a" style="left:806.20px;top:360.42px;width:27.20px;height:13.68px;background:#d8d8d8;"></div>
<div class="a" style="left:224.30px;top:442.50px;width:27.20px;height:13.68px;background:#d8d8d8;"></div>
<div class="a" style="left:292.30px;top:442.50px;width:26.50px;height:13.68px;background:#d8d8d8;"></div>
<div class="a" style="left:346.40px;top:442.50px;width:26.60px;height:13.68px;background:#d8d8d8;"></div>
<div class="a" style="left:409.80px;top:442.50px;width:27.40px;height:13.68px;background:#d8d8d8;"></div>
<div class="a" style="left:464.60px;top:442.50px;width:27.10px;height:13.68px;background:#d8d8d8;"></div>
<div class="a" style="left:518.60px;top:442.50px;width:27.00px;height:13.68px;background:#d8d8d8;"></div>
<div class="a" style="left:573.30px;top:442.50px;width:27.40px;height:13.68px;background:#d8d8d8;"></div>
<div class="a" style="left:627.60px;top:442.50px;width:27.70px;height:13.68px;background:#d8d8d8;"></div>
<div class="a" style="left:687.80px;top:442.50px;width:26.90px;height:13.68px;background:#d8d8d8;"></div>
<div class="a" style="left:751.40px;top:442.50px;width:27.40px;height:13.68px;background:#d8d8d8;"></div>
<div class="a" style="left:806.20px;top:442.50px;width:27.20px;height:13.68px;background:#d8d8d8;"></div>
<div class="a" style="left:224.30px;top:456.18px;width:27.20px;height:13.68px;background:#d8d8d8;"></div>
<div class="a" style="left:292.30px;top:456.18px;width:26.50px;height:13.68px;background:#d8d8d8;"></div>
<div class="a" style="left:346.40px;top:456.18px;width:26.60px;height:13.68px;background:#d8d8d8;"></div>
<div class="a" style="left:409.80px;top:456.18px;width:27.40px;height:13.68px;background:#d8d8d8;"></div>
<div class="a" style="left:464.60px;top:456.18px;width:27.10px;height:13.68px;background:#d8d8d8;"></div>
<div class="a" style="left:518.60px;top:456.18px;width:27.00px;height:13.68px;background:#d8d8d8;"></div>
<div class="a" style="left:573.30px;top:456.18px;width:27.40px;height:13.68px;background:#d8d8d8;"></div>
<div class="a" style="left:627.60px;top:456.18px;width:27.70px;height:13.68px;background:#d8d8d8;"></div>
<div class="a" style="left:687.80px;top:456.18px;width:26.90px;height:13.68px;background:#d8d8d8;"></div>
<div class="a" style="left:751.40px;top:456.18px;width:27.40px;height:13.68px;background:#d8d8d8;"></div>
<div class="a" style="left:806.20px;top:456.18px;width:27.20px;height:13.68px;background:#d8d8d8;"></div>
<div class="a" style="left:224.30px;top:469.86px;width:27.20px;height:13.68px;background:#d8d8d8;"></div>
<div class="a" style="left:292.30px;top:469.86px;width:26.50px;height:13.68px;background:#d8d8d8;"></div>
<div class="a" style="left:346.40px;top:469.86px;width:26.60px;height:13.68px;background:#d8d8d8;"></div>
<div class="a" style="left:409.80px;top:469.86px;width:27.40px;height:13.68px;background:#d8d8d8;"></div>
<div class="a" style="left:464.60px;top:469.86px;width:27.10px;height:13.68px;background:#d8d8d8;"></div>
<div class="a" style="left:518.60px;top:469.86px;width:27.00px;height:13.68px;background:#d8d8d8;"></div>
<div class="a" style="left:573.30px;top:469.86px;width:27.40px;height:13.68px;background:#d8d8d8;"></div>
<div class="a" style="left:627.60px;top:469.86px;width:27.70px;height:13.68px;background:#d8d8d8;"></div>
<div class="a" style="left:687.80px;top:469.86px;width:26.90px;height:13.68px;background:#d8d8d8;"></div>
<div class="a" style="left:751.40px;top:469.86px;width:27.40px;height:13.68px;background:#d8d8d8;"></div>
<div class="a" style="left:806.20px;top:469.86px;width:27.20px;height:13.68px;background:#d8d8d8;"></div>
<div class="a" style="left:224.30px;top:483.54px;width:27.20px;height:13.68px;background:#d8d8d8;"></div>
<div class="a" style="left:292.30px;top:483.54px;width:26.50px;height:13.68px;background:#d8d8d8;"></div>
<div class="a" style="left:346.40px;top:483.54px;width:26.60px;height:13.68px;background:#d8d8d8;"></div>
<div class="a" style="left:409.80px;top:483.54px;width:27.40px;height:13.68px;background:#d8d8d8;"></div>
<div class="a" style="left:464.60px;top:483.54px;width:27.10px;height:13.68px;background:#d8d8d8;"></div>
<div class="a" style="left:518.60px;top:483.54px;width:27.00px;height:13.68px;background:#d8d8d8;"></div>
<div class="a" style="left:573.30px;top:483.54px;width:27.40px;height:13.68px;background:#d8d8d8;"></div>
<div class="a" style="left:627.60px;top:483.54px;width:27.70px;height:13.68px;background:#d8d8d8;"></div>
<div class="a" style="left:687.80px;top:483.54px;width:26.90px;height:13.68px;background:#d8d8d8;"></div>
<div class="a" style="left:751.40px;top:483.54px;width:27.40px;height:13.68px;background:#d8d8d8;"></div>
<div class="a" style="left:806.20px;top:483.54px;width:27.20px;height:13.68px;background:#d8d8d8;"></div>
<div class="a" style="left:224.30px;top:497.22px;width:27.20px;height:13.68px;background:#d8d8d8;"></div>
<div class="a" style="left:292.30px;top:497.22px;width:26.50px;height:13.68px;background:#d8d8d8;"></div>
<div class="a" style="left:346.40px;top:497.22px;width:26.60px;height:13.68px;background:#d8d8d8;"></div>
<div class="a" style="left:409.80px;top:497.22px;width:27.40px;height:13.68px;background:#d8d8d8;"></div>
<div class="a" style="left:464.60px;top:497.22px;width:27.10px;height:13.68px;background:#d8d8d8;"></div>
<div class="a" style="left:518.60px;top:497.22px;width:27.00px;height:13.68px;background:#d8d8d8;"></div>
<div class="a" style="left:573.30px;top:497.22px;width:27.40px;height:13.68px;background:#d8d8d8;"></div>
<div class="a" style="left:627.60px;top:497.22px;width:27.70px;height:13.68px;background:#d8d8d8;"></div>
<div class="a" style="left:687.80px;top:497.22px;width:26.90px;height:13.68px;background:#d8d8d8;"></div>
<div class="a" style="left:751.40px;top:497.22px;width:27.40px;height:13.68px;background:#d8d8d8;"></div>
<div class="a" style="left:806.20px;top:497.22px;width:27.20px;height:13.68px;background:#d8d8d8;"></div>
<div class="a" style="left:224.30px;top:510.90px;width:27.20px;height:13.68px;background:#d8d8d8;"></div>
<div class="a" style="left:292.30px;top:510.90px;width:26.50px;height:13.68px;background:#d8d8d8;"></div>
<div class="a" style="left:346.40px;top:510.90px;width:26.60px;height:13.68px;background:#d8d8d8;"></div>
<div class="a" style="left:409.80px;top:510.90px;width:27.40px;height:13.68px;background:#d8d8d8;"></div>
<div class="a" style="left:464.60px;top:510.90px;width:27.10px;height:13.68px;background:#d8d8d8;"></div>
<div class="a" style="left:518.60px;top:510.90px;width:27.00px;height:13.68px;background:#d8d8d8;"></div>
<div class="a" style="left:573.30px;top:510.90px;width:27.40px;height:13.68px;background:#d8d8d8;"></div>
<div class="a" style="left:627.60px;top:510.90px;width:27.70px;height:13.68px;background:#d8d8d8;"></div>
<div class="a" style="left:687.80px;top:510.90px;width:26.90px;height:13.68px;background:#d8d8d8;"></div>
<div class="a" style="left:751.40px;top:510.90px;width:27.40px;height:13.68px;background:#d8d8d8;"></div>
<div class="a" style="left:806.20px;top:510.90px;width:27.20px;height:13.68px;background:#d8d8d8;"></div>
<div class="a" style="left:224.30px;top:524.58px;width:27.20px;height:13.68px;background:#d8d8d8;"></div>
<div class="a" style="left:292.30px;top:524.58px;width:26.50px;height:13.68px;background:#d8d8d8;"></div>
<div class="a" style="left:346.40px;top:524.58px;width:26.60px;height:13.68px;background:#d8d8d8;"></div>
<div class="a" style="left:409.80px;top:524.58px;width:27.40px;height:13.68px;background:#d8d8d8;"></div>
<div class="a" style="left:464.60px;top:524.58px;width:27.10px;height:13.68px;background:#d8d8d8;"></div>
<div class="a" style="left:518.60px;top:524.58px;width:27.00px;height:13.68px;background:#d8d8d8;"></div>
<div class="a" style="left:573.30px;top:524.58px;width:27.40px;height:13.68px;background:#d8d8d8;"></div>
<div class="a" style="left:627.60px;top:524.58px;width:27.70px;height:13.68px;background:#d8d8d8;"></div>
<div class="a" style="left:687.80px;top:524.58px;width:26.90px;height:13.68px;background:#d8d8d8;"></div>
<div class="a" style="left:751.40px;top:524.58px;width:27.40px;height:13.68px;background:#d8d8d8;"></div>
<div class="a" style="left:806.20px;top:524.58px;width:27.20px;height:13.68px;background:#d8d8d8;"></div>
<div class="a" style="left:224.30px;top:538.26px;width:27.20px;height:13.68px;background:#d8d8d8;"></div>
<div class="a" style="left:292.30px;top:538.26px;width:26.50px;height:13.68px;background:#d8d8d8;"></div>
<div class="a" style="left:346.40px;top:538.26px;width:26.60px;height:13.68px;background:#d8d8d8;"></div>
<div class="a" style="left:409.80px;top:538.26px;width:27.40px;height:13.68px;background:#d8d8d8;"></div>
<div class="a" style="left:464.60px;top:538.26px;width:27.10px;height:13.68px;background:#d8d8d8;"></div>
<div class="a" style="left:518.60px;top:538.26px;width:27.00px;height:13.68px;background:#d8d8d8;"></div>
<div class="a" style="left:573.30px;top:538.26px;width:27.40px;height:13.68px;background:#d8d8d8;"></div>
<div class="a" style="left:627.60px;top:538.26px;width:27.70px;height:13.68px;background:#d8d8d8;"></div>
<div class="a" style="left:687.80px;top:538.26px;width:26.90px;height:13.68px;background:#d8d8d8;"></div>
<div class="a" style="left:751.40px;top:538.26px;width:27.40px;height:13.68px;background:#d8d8d8;"></div>
<div class="a" style="left:806.20px;top:538.26px;width:27.20px;height:13.68px;background:#d8d8d8;"></div>
<div class="a" style="left:224.30px;top:551.94px;width:27.20px;height:13.68px;background:#d8d8d8;"></div>
<div class="a" style="left:292.30px;top:551.94px;width:26.50px;height:13.68px;background:#d8d8d8;"></div>
<div class="a" style="left:346.40px;top:551.94px;width:26.60px;height:13.68px;background:#d8d8d8;"></div>
<div class="a" style="left:409.80px;top:551.94px;width:27.40px;height:13.68px;background:#d8d8d8;"></div>
<div class="a" style="left:464.60px;top:551.94px;width:27.10px;height:13.68px;background:#d8d8d8;"></div>
<div class="a" style="left:518.60px;top:551.94px;width:27.00px;height:13.68px;background:#d8d8d8;"></div>
<div class="a" style="left:573.30px;top:551.94px;width:27.40px;height:13.68px;background:#d8d8d8;"></div>
<div class="a" style="left:627.60px;top:551.94px;width:27.70px;height:13.68px;background:#d8d8d8;"></div>
<div class="a" style="left:687.80px;top:551.94px;width:26.90px;height:13.68px;background:#d8d8d8;"></div>
<div class="a" style="left:751.40px;top:551.94px;width:27.40px;height:13.68px;background:#d8d8d8;"></div>
<div class="a" style="left:806.20px;top:551.94px;width:27.20px;height:13.68px;background:#d8d8d8;"></div>
<div class="a" style="left:224.00px;top:401.46px;width:1.00px;height:13.68px;background:#e0e1e2;"></div>
<div class="a" style="left:251.00px;top:401.46px;width:1.00px;height:13.68px;background:#e0e1e2;"></div>
<div class="a" style="left:292.00px;top:401.46px;width:1.00px;height:13.68px;background:#e0e1e2;"></div>
<div class="a" style="left:318.00px;top:401.46px;width:1.00px;height:13.68px;background:#e0e1e2;"></div>
<div class="a" style="left:346.00px;top:401.46px;width:1.00px;height:13.68px;background:#e0e1e2;"></div>
<div class="a" style="left:373.00px;top:401.46px;width:1.00px;height:13.68px;background:#e0e1e2;"></div>
<div class="a" style="left:409.00px;top:401.46px;width:1.00px;height:13.68px;background:#e0e1e2;"></div>
<div class="a" style="left:437.00px;top:401.46px;width:1.00px;height:13.68px;background:#e0e1e2;"></div>
<div class="a" style="left:464.00px;top:401.46px;width:1.00px;height:13.68px;background:#e0e1e2;"></div>
<div class="a" style="left:491.00px;top:401.46px;width:1.00px;height:13.68px;background:#e0e1e2;"></div>
<div class="a" style="left:518.00px;top:401.46px;width:1.00px;height:13.68px;background:#e0e1e2;"></div>
<div class="a" style="left:545.00px;top:401.46px;width:1.00px;height:13.68px;background:#e0e1e2;"></div>
<div class="a" style="left:573.00px;top:401.46px;width:1.00px;height:13.68px;background:#e0e1e2;"></div>
<div class="a" style="left:600.00px;top:401.46px;width:1.00px;height:13.68px;background:#e0e1e2;"></div>
<div class="a" style="left:627.00px;top:401.46px;width:1.00px;height:13.68px;background:#e0e1e2;"></div>
<div class="a" style="left:655.00px;top:401.46px;width:1.00px;height:13.68px;background:#e0e1e2;"></div>
<div class="a" style="left:687.00px;top:401.46px;width:1.00px;height:13.68px;background:#e0e1e2;"></div>
<div class="a" style="left:714.00px;top:401.46px;width:1.00px;height:13.68px;background:#e0e1e2;"></div>
<div class="a" style="left:751.00px;top:401.46px;width:1.00px;height:13.68px;background:#e0e1e2;"></div>
<div class="a" style="left:778.00px;top:401.46px;width:1.00px;height:13.68px;background:#e0e1e2;"></div>
<div class="a" style="left:806.00px;top:401.46px;width:1.00px;height:13.68px;background:#e0e1e2;"></div>
<div class="a" style="left:833.00px;top:401.46px;width:1.00px;height:13.68px;background:#e0e1e2;"></div>
<div class="a" style="left:861.00px;top:401.46px;width:1.00px;height:13.68px;background:#e0e1e2;"></div>
<div class="a" style="left:251.00px;top:374.10px;width:1.00px;height:13.68px;background:#e0e1e2;"></div>
<div class="a" style="left:318.00px;top:374.10px;width:1.00px;height:13.68px;background:#e0e1e2;"></div>
<div class="a" style="left:373.00px;top:374.10px;width:1.00px;height:13.68px;background:#e0e1e2;"></div>
<div class="a" style="left:224.30px;top:592.98px;width:637.00px;height:6.82px;background:#fff;"></div>
<div class="a" style="left:223.80px;top:592.98px;width:1.00px;height:6.82px;background:#e0e1e2;"></div>
<div class="a" style="left:251.00px;top:592.98px;width:1.00px;height:6.82px;background:#e0e1e2;"></div>
<div class="a" style="left:291.80px;top:592.98px;width:1.00px;height:6.82px;background:#e0e1e2;"></div>
<div class="a" style="left:318.30px;top:592.98px;width:1.00px;height:6.82px;background:#e0e1e2;"></div>
<div class="a" style="left:345.90px;top:592.98px;width:1.00px;height:6.82px;background:#e0e1e2;"></div>
<div class="a" style="left:372.50px;top:592.98px;width:1.00px;height:6.82px;background:#e0e1e2;"></div>
<div class="a" style="left:409.30px;top:592.98px;width:1.00px;height:6.82px;background:#e0e1e2;"></div>
<div class="a" style="left:436.70px;top:592.98px;width:1.00px;height:6.82px;background:#e0e1e2;"></div>
<div class="a" style="left:464.10px;top:592.98px;width:1.00px;height:6.82px;background:#e0e1e2;"></div>
<div class="a" style="left:491.20px;top:592.98px;width:1.00px;height:6.82px;background:#e0e1e2;"></div>
<div class="a" style="left:518.10px;top:592.98px;width:1.00px;height:6.82px;background:#e0e1e2;"></div>
<div class="a" style="left:545.10px;top:592.98px;width:1.00px;height:6.82px;background:#e0e1e2;"></div>
<div class="a" style="left:572.80px;top:592.98px;width:1.00px;height:6.82px;background:#e0e1e2;"></div>
<div class="a" style="left:600.20px;top:592.98px;width:1.00px;height:6.82px;background:#e0e1e2;"></div>
<div class="a" style="left:627.10px;top:592.98px;width:1.00px;height:6.82px;background:#e0e1e2;"></div>
<div class="a" style="left:654.80px;top:592.98px;width:1.00px;height:6.82px;background:#e0e1e2;"></div>
<div class="a" style="left:687.30px;top:592.98px;width:1.00px;height:6.82px;background:#e0e1e2;"></div>
<div class="a" style="left:714.20px;top:592.98px;width:1.00px;height:6.82px;background:#e0e1e2;"></div>
<div class="a" style="left:750.90px;top:592.98px;width:1.00px;height:6.82px;background:#e0e1e2;"></div>
<div class="a" style="left:778.30px;top:592.98px;width:1.00px;height:6.82px;background:#e0e1e2;"></div>
<div class="a" style="left:805.70px;top:592.98px;width:1.00px;height:6.82px;background:#e0e1e2;"></div>
<div class="a" style="left:832.90px;top:592.98px;width:1.00px;height:6.82px;background:#e0e1e2;"></div>
<div class="a" style="left:860.80px;top:592.98px;width:1.00px;height:6.82px;background:#e0e1e2;"></div>
<div class="a" style="left:251.00px;top:305.00px;width:1.00px;height:15.00px;background:#4a4a4a;"></div>
<div class="a" style="left:292.00px;top:305.00px;width:1.00px;height:15.00px;background:#4a4a4a;"></div>
<div class="a" style="left:318.00px;top:305.00px;width:1.00px;height:15.00px;background:#4a4a4a;"></div>
<div class="a" style="left:346.00px;top:305.00px;width:1.00px;height:15.00px;background:#4a4a4a;"></div>
<div class="a" style="left:373.00px;top:305.00px;width:1.00px;height:15.00px;background:#4a4a4a;"></div>
<div class="a" style="left:409.00px;top:305.00px;width:1.00px;height:15.00px;background:#4a4a4a;"></div>
<div class="a" style="left:437.00px;top:305.00px;width:1.00px;height:15.00px;background:#4a4a4a;"></div>
<div class="a" style="left:464.00px;top:305.00px;width:1.00px;height:15.00px;background:#4a4a4a;"></div>
<div class="a" style="left:491.00px;top:305.00px;width:1.00px;height:15.00px;background:#4a4a4a;"></div>
<div class="a" style="left:518.00px;top:305.00px;width:1.00px;height:15.00px;background:#4a4a4a;"></div>
<div class="a" style="left:545.00px;top:305.00px;width:1.00px;height:15.00px;background:#4a4a4a;"></div>
<div class="a" style="left:573.00px;top:305.00px;width:1.00px;height:15.00px;background:#4a4a4a;"></div>
<div class="a" style="left:600.00px;top:305.00px;width:1.00px;height:15.00px;background:#4a4a4a;"></div>
<div class="a" style="left:627.00px;top:305.00px;width:1.00px;height:15.00px;background:#4a4a4a;"></div>
<div class="a" style="left:655.00px;top:305.00px;width:1.00px;height:15.00px;background:#4a4a4a;"></div>
<div class="a" style="left:687.00px;top:305.00px;width:1.00px;height:15.00px;background:#4a4a4a;"></div>
<div class="a" style="left:714.00px;top:305.00px;width:1.00px;height:15.00px;background:#4a4a4a;"></div>
<div class="a" style="left:751.00px;top:305.00px;width:1.00px;height:15.00px;background:#4a4a4a;"></div>
<div class="a" style="left:778.00px;top:305.00px;width:1.00px;height:15.00px;background:#4a4a4a;"></div>
<div class="a" style="left:806.00px;top:305.00px;width:1.00px;height:15.00px;background:#4a4a4a;"></div>
<div class="a" style="left:833.00px;top:305.00px;width:1.00px;height:15.00px;background:#4a4a4a;"></div>
<div class="a" style="left:861.00px;top:305.00px;width:1.00px;height:15.00px;background:#4a4a4a;"></div>
<div class="a" style="left:251.00px;top:319.00px;width:1.00px;height:15.00px;background:#4a4a4a;"></div>
<div class="a" style="left:292.00px;top:319.00px;width:1.00px;height:15.00px;background:#4a4a4a;"></div>
<div class="a" style="left:318.00px;top:319.00px;width:1.00px;height:15.00px;background:#4a4a4a;"></div>
<div class="a" style="left:346.00px;top:319.00px;width:1.00px;height:15.00px;background:#4a4a4a;"></div>
<div class="a" style="left:373.00px;top:319.00px;width:1.00px;height:15.00px;background:#4a4a4a;"></div>
<div class="a" style="left:409.00px;top:319.00px;width:1.00px;height:15.00px;background:#4a4a4a;"></div>
<div class="a" style="left:437.00px;top:319.00px;width:1.00px;height:15.00px;background:#4a4a4a;"></div>
<div class="a" style="left:464.00px;top:319.00px;width:1.00px;height:15.00px;background:#4a4a4a;"></div>
<div class="a" style="left:491.00px;top:319.00px;width:1.00px;height:15.00px;background:#4a4a4a;"></div>
<div class="a" style="left:518.00px;top:319.00px;width:1.00px;height:15.00px;background:#4a4a4a;"></div>
<div class="a" style="left:545.00px;top:319.00px;width:1.00px;height:15.00px;background:#4a4a4a;"></div>
<div class="a" style="left:573.00px;top:319.00px;width:1.00px;height:15.00px;background:#4a4a4a;"></div>
<div class="a" style="left:600.00px;top:319.00px;width:1.00px;height:15.00px;background:#4a4a4a;"></div>
<div class="a" style="left:627.00px;top:319.00px;width:1.00px;height:15.00px;background:#4a4a4a;"></div>
<div class="a" style="left:655.00px;top:319.00px;width:1.00px;height:15.00px;background:#4a4a4a;"></div>
<div class="a" style="left:687.00px;top:319.00px;width:1.00px;height:15.00px;background:#4a4a4a;"></div>
<div class="a" style="left:714.00px;top:319.00px;width:1.00px;height:15.00px;background:#4a4a4a;"></div>
<div class="a" style="left:751.00px;top:319.00px;width:1.00px;height:15.00px;background:#4a4a4a;"></div>
<div class="a" style="left:778.00px;top:319.00px;width:1.00px;height:15.00px;background:#4a4a4a;"></div>
<div class="a" style="left:806.00px;top:319.00px;width:1.00px;height:15.00px;background:#4a4a4a;"></div>
<div class="a" style="left:833.00px;top:319.00px;width:1.00px;height:15.00px;background:#4a4a4a;"></div>
<div class="a" style="left:861.00px;top:319.00px;width:1.00px;height:15.00px;background:#4a4a4a;"></div>
<div class="a" style="left:251.00px;top:333.00px;width:1.00px;height:14.00px;background:#4a4a4a;"></div>
<div class="a" style="left:292.00px;top:333.00px;width:1.00px;height:14.00px;background:#4a4a4a;"></div>
<div class="a" style="left:318.00px;top:333.00px;width:1.00px;height:14.00px;background:#4a4a4a;"></div>
<div class="a" style="left:346.00px;top:333.00px;width:1.00px;height:14.00px;background:#4a4a4a;"></div>
<div class="a" style="left:373.00px;top:333.00px;width:1.00px;height:14.00px;background:#4a4a4a;"></div>
<div class="a" style="left:409.00px;top:333.00px;width:1.00px;height:14.00px;background:#4a4a4a;"></div>
<div class="a" style="left:437.00px;top:333.00px;width:1.00px;height:14.00px;background:#4a4a4a;"></div>
<div class="a" style="left:464.00px;top:333.00px;width:1.00px;height:14.00px;background:#4a4a4a;"></div>
<div class="a" style="left:491.00px;top:333.00px;width:1.00px;height:14.00px;background:#4a4a4a;"></div>
<div class="a" style="left:518.00px;top:333.00px;width:1.00px;height:14.00px;background:#4a4a4a;"></div>
<div class="a" style="left:545.00px;top:333.00px;width:1.00px;height:14.00px;background:#4a4a4a;"></div>
<div class="a" style="left:573.00px;top:333.00px;width:1.00px;height:14.00px;background:#4a4a4a;"></div>
<div class="a" style="left:600.00px;top:333.00px;width:1.00px;height:14.00px;background:#4a4a4a;"></div>
<div class="a" style="left:627.00px;top:333.00px;width:1.00px;height:14.00px;background:#4a4a4a;"></div>
<div class="a" style="left:655.00px;top:333.00px;width:1.00px;height:14.00px;background:#4a4a4a;"></div>
<div class="a" style="left:687.00px;top:333.00px;width:1.00px;height:14.00px;background:#4a4a4a;"></div>
<div class="a" style="left:714.00px;top:333.00px;width:1.00px;height:14.00px;background:#4a4a4a;"></div>
<div class="a" style="left:751.00px;top:333.00px;width:1.00px;height:14.00px;background:#4a4a4a;"></div>
<div class="a" style="left:778.00px;top:333.00px;width:1.00px;height:14.00px;background:#4a4a4a;"></div>
<div class="a" style="left:806.00px;top:333.00px;width:1.00px;height:14.00px;background:#4a4a4a;"></div>
<div class="a" style="left:833.00px;top:333.00px;width:1.00px;height:14.00px;background:#4a4a4a;"></div>
<div class="a" style="left:861.00px;top:333.00px;width:1.00px;height:14.00px;background:#4a4a4a;"></div>
<div class="a" style="left:251.00px;top:346.00px;width:1.00px;height:15.00px;background:#4a4a4a;"></div>
<div class="a" style="left:292.00px;top:346.00px;width:1.00px;height:15.00px;background:#4a4a4a;"></div>
<div class="a" style="left:318.00px;top:346.00px;width:1.00px;height:15.00px;background:#4a4a4a;"></div>
<div class="a" style="left:346.00px;top:346.00px;width:1.00px;height:15.00px;background:#4a4a4a;"></div>
<div class="a" style="left:373.00px;top:346.00px;width:1.00px;height:15.00px;background:#4a4a4a;"></div>
<div class="a" style="left:409.00px;top:346.00px;width:1.00px;height:15.00px;background:#4a4a4a;"></div>
<div class="a" style="left:437.00px;top:346.00px;width:1.00px;height:15.00px;background:#4a4a4a;"></div>
<div class="a" style="left:464.00px;top:346.00px;width:1.00px;height:15.00px;background:#4a4a4a;"></div>
<div class="a" style="left:491.00px;top:346.00px;width:1.00px;height:15.00px;background:#4a4a4a;"></div>
<div class="a" style="left:518.00px;top:346.00px;width:1.00px;height:15.00px;background:#4a4a4a;"></div>
<div class="a" style="left:545.00px;top:346.00px;width:1.00px;height:15.00px;background:#4a4a4a;"></div>
<div class="a" style="left:573.00px;top:346.00px;width:1.00px;height:15.00px;background:#4a4a4a;"></div>
<div class="a" style="left:600.00px;top:346.00px;width:1.00px;height:15.00px;background:#4a4a4a;"></div>
<div class="a" style="left:627.00px;top:346.00px;width:1.00px;height:15.00px;background:#4a4a4a;"></div>
<div class="a" style="left:655.00px;top:346.00px;width:1.00px;height:15.00px;background:#4a4a4a;"></div>
<div class="a" style="left:687.00px;top:346.00px;width:1.00px;height:15.00px;background:#4a4a4a;"></div>
<div class="a" style="left:714.00px;top:346.00px;width:1.00px;height:15.00px;background:#4a4a4a;"></div>
<div class="a" style="left:751.00px;top:346.00px;width:1.00px;height:15.00px;background:#4a4a4a;"></div>
<div class="a" style="left:778.00px;top:346.00px;width:1.00px;height:15.00px;background:#4a4a4a;"></div>
<div class="a" style="left:806.00px;top:346.00px;width:1.00px;height:15.00px;background:#4a4a4a;"></div>
<div class="a" style="left:833.00px;top:346.00px;width:1.00px;height:15.00px;background:#4a4a4a;"></div>
<div class="a" style="left:861.00px;top:346.00px;width:1.00px;height:15.00px;background:#4a4a4a;"></div>
<div class="a" style="left:251.00px;top:360.00px;width:1.00px;height:15.00px;background:#4a4a4a;"></div>
<div class="a" style="left:292.00px;top:360.00px;width:1.00px;height:15.00px;background:#4a4a4a;"></div>
<div class="a" style="left:318.00px;top:360.00px;width:1.00px;height:15.00px;background:#4a4a4a;"></div>
<div class="a" style="left:346.00px;top:360.00px;width:1.00px;height:15.00px;background:#4a4a4a;"></div>
<div class="a" style="left:373.00px;top:360.00px;width:1.00px;height:15.00px;background:#4a4a4a;"></div>
<div class="a" style="left:409.00px;top:360.00px;width:1.00px;height:15.00px;background:#4a4a4a;"></div>
<div class="a" style="left:437.00px;top:360.00px;width:1.00px;height:15.00px;background:#4a4a4a;"></div>
<div class="a" style="left:464.00px;top:360.00px;width:1.00px;height:15.00px;background:#4a4a4a;"></div>
<div class="a" style="left:491.00px;top:360.00px;width:1.00px;height:15.00px;background:#4a4a4a;"></div>
<div class="a" style="left:518.00px;top:360.00px;width:1.00px;height:15.00px;background:#4a4a4a;"></div>
<div class="a" style="left:545.00px;top:360.00px;width:1.00px;height:15.00px;background:#4a4a4a;"></div>
<div class="a" style="left:573.00px;top:360.00px;width:1.00px;height:15.00px;background:#4a4a4a;"></div>
<div class="a" style="left:600.00px;top:360.00px;width:1.00px;height:15.00px;background:#4a4a4a;"></div>
<div class="a" style="left:627.00px;top:360.00px;width:1.00px;height:15.00px;background:#4a4a4a;"></div>
<div class="a" style="left:655.00px;top:360.00px;width:1.00px;height:15.00px;background:#4a4a4a;"></div>
<div class="a" style="left:687.00px;top:360.00px;width:1.00px;height:15.00px;background:#4a4a4a;"></div>
<div class="a" style="left:714.00px;top:360.00px;width:1.00px;height:15.00px;background:#4a4a4a;"></div>
<div class="a" style="left:751.00px;top:360.00px;width:1.00px;height:15.00px;background:#4a4a4a;"></div>
<div class="a" style="left:778.00px;top:360.00px;width:1.00px;height:15.00px;background:#4a4a4a;"></div>
<div class="a" style="left:806.00px;top:360.00px;width:1.00px;height:15.00px;background:#4a4a4a;"></div>
<div class="a" style="left:833.00px;top:360.00px;width:1.00px;height:15.00px;background:#4a4a4a;"></div>
<div class="a" style="left:861.00px;top:360.00px;width:1.00px;height:15.00px;background:#4a4a4a;"></div>
<div class="a" style="left:251.00px;top:442.00px;width:1.00px;height:15.00px;background:#4a4a4a;"></div>
<div class="a" style="left:292.00px;top:442.00px;width:1.00px;height:15.00px;background:#4a4a4a;"></div>
<div class="a" style="left:318.00px;top:442.00px;width:1.00px;height:15.00px;background:#4a4a4a;"></div>
<div class="a" style="left:346.00px;top:442.00px;width:1.00px;height:15.00px;background:#4a4a4a;"></div>
<div class="a" style="left:373.00px;top:442.00px;width:1.00px;height:15.00px;background:#4a4a4a;"></div>
<div class="a" style="left:409.00px;top:442.00px;width:1.00px;height:15.00px;background:#4a4a4a;"></div>
<div class="a" style="left:437.00px;top:442.00px;width:1.00px;height:15.00px;background:#4a4a4a;"></div>
<div class="a" style="left:464.00px;top:442.00px;width:1.00px;height:15.00px;background:#4a4a4a;"></div>
<div class="a" style="left:491.00px;top:442.00px;width:1.00px;height:15.00px;background:#4a4a4a;"></div>
<div class="a" style="left:518.00px;top:442.00px;width:1.00px;height:15.00px;background:#4a4a4a;"></div>
<div class="a" style="left:545.00px;top:442.00px;width:1.00px;height:15.00px;background:#4a4a4a;"></div>
<div class="a" style="left:573.00px;top:442.00px;width:1.00px;height:15.00px;background:#4a4a4a;"></div>
<div class="a" style="left:600.00px;top:442.00px;width:1.00px;height:15.00px;background:#4a4a4a;"></div>
<div class="a" style="left:627.00px;top:442.00px;width:1.00px;height:15.00px;background:#4a4a4a;"></div>
<div class="a" style="left:655.00px;top:442.00px;width:1.00px;height:15.00px;background:#4a4a4a;"></div>
<div class="a" style="left:687.00px;top:442.00px;width:1.00px;height:15.00px;background:#4a4a4a;"></div>
<div class="a" style="left:714.00px;top:442.00px;width:1.00px;height:15.00px;background:#4a4a4a;"></div>
<div class="a" style="left:751.00px;top:442.00px;width:1.00px;height:15.00px;background:#4a4a4a;"></div>
<div class="a" style="left:778.00px;top:442.00px;width:1.00px;height:15.00px;background:#4a4a4a;"></div>
<div class="a" style="left:806.00px;top:442.00px;width:1.00px;height:15.00px;background:#4a4a4a;"></div>
<div class="a" style="left:833.00px;top:442.00px;width:1.00px;height:15.00px;background:#4a4a4a;"></div>
<div class="a" style="left:861.00px;top:442.00px;width:1.00px;height:15.00px;background:#4a4a4a;"></div>
<div class="a" style="left:251.00px;top:456.00px;width:1.00px;height:14.00px;background:#4a4a4a;"></div>
<div class="a" style="left:292.00px;top:456.00px;width:1.00px;height:14.00px;background:#4a4a4a;"></div>
<div class="a" style="left:318.00px;top:456.00px;width:1.00px;height:14.00px;background:#4a4a4a;"></div>
<div class="a" style="left:346.00px;top:456.00px;width:1.00px;height:14.00px;background:#4a4a4a;"></div>
<div class="a" style="left:373.00px;top:456.00px;width:1.00px;height:14.00px;background:#4a4a4a;"></div>
<div class="a" style="left:409.00px;top:456.00px;width:1.00px;height:14.00px;background:#4a4a4a;"></div>
<div class="a" style="left:437.00px;top:456.00px;width:1.00px;height:14.00px;background:#4a4a4a;"></div>
<div class="a" style="left:464.00px;top:456.00px;width:1.00px;height:14.00px;background:#4a4a4a;"></div>
<div class="a" style="left:491.00px;top:456.00px;width:1.00px;height:14.00px;background:#4a4a4a;"></div>
<div class="a" style="left:518.00px;top:456.00px;width:1.00px;height:14.00px;background:#4a4a4a;"></div>
<div class="a" style="left:545.00px;top:456.00px;width:1.00px;height:14.00px;background:#4a4a4a;"></div>
<div class="a" style="left:573.00px;top:456.00px;width:1.00px;height:14.00px;background:#4a4a4a;"></div>
<div class="a" style="left:600.00px;top:456.00px;width:1.00px;height:14.00px;background:#4a4a4a;"></div>
<div class="a" style="left:627.00px;top:456.00px;width:1.00px;height:14.00px;background:#4a4a4a;"></div>
<div class="a" style="left:655.00px;top:456.00px;width:1.00px;height:14.00px;background:#4a4a4a;"></div>
<div class="a" style="left:687.00px;top:456.00px;width:1.00px;height:14.00px;background:#4a4a4a;"></div>
<div class="a" style="left:714.00px;top:456.00px;width:1.00px;height:14.00px;background:#4a4a4a;"></div>
<div class="a" style="left:751.00px;top:456.00px;width:1.00px;height:14.00px;background:#4a4a4a;"></div>
<div class="a" style="left:778.00px;top:456.00px;width:1.00px;height:14.00px;background:#4a4a4a;"></div>
<div class="a" style="left:806.00px;top:456.00px;width:1.00px;height:14.00px;background:#4a4a4a;"></div>
<div class="a" style="left:833.00px;top:456.00px;width:1.00px;height:14.00px;background:#4a4a4a;"></div>
<div class="a" style="left:861.00px;top:456.00px;width:1.00px;height:14.00px;background:#4a4a4a;"></div>
<div class="a" style="left:251.00px;top:469.00px;width:1.00px;height:15.00px;background:#4a4a4a;"></div>
<div class="a" style="left:292.00px;top:469.00px;width:1.00px;height:15.00px;background:#4a4a4a;"></div>
<div class="a" style="left:318.00px;top:469.00px;width:1.00px;height:15.00px;background:#4a4a4a;"></div>
<div class="a" style="left:346.00px;top:469.00px;width:1.00px;height:15.00px;background:#4a4a4a;"></div>
<div class="a" style="left:373.00px;top:469.00px;width:1.00px;height:15.00px;background:#4a4a4a;"></div>
<div class="a" style="left:409.00px;top:469.00px;width:1.00px;height:15.00px;background:#4a4a4a;"></div>
<div class="a" style="left:437.00px;top:469.00px;width:1.00px;height:15.00px;background:#4a4a4a;"></div>
<div class="a" style="left:464.00px;top:469.00px;width:1.00px;height:15.00px;background:#4a4a4a;"></div>
<div class="a" style="left:491.00px;top:469.00px;width:1.00px;height:15.00px;background:#4a4a4a;"></div>
<div class="a" style="left:518.00px;top:469.00px;width:1.00px;height:15.00px;background:#4a4a4a;"></div>
<div class="a" style="left:545.00px;top:469.00px;width:1.00px;height:15.00px;background:#4a4a4a;"></div>
<div class="a" style="left:573.00px;top:469.00px;width:1.00px;height:15.00px;background:#4a4a4a;"></div>
<div class="a" style="left:600.00px;top:469.00px;width:1.00px;height:15.00px;background:#4a4a4a;"></div>
<div class="a" style="left:627.00px;top:469.00px;width:1.00px;height:15.00px;background:#4a4a4a;"></div>
<div class="a" style="left:655.00px;top:469.00px;width:1.00px;height:15.00px;background:#4a4a4a;"></div>
<div class="a" style="left:687.00px;top:469.00px;width:1.00px;height:15.00px;background:#4a4a4a;"></div>
<div class="a" style="left:714.00px;top:469.00px;width:1.00px;height:15.00px;background:#4a4a4a;"></div>
<div class="a" style="left:751.00px;top:469.00px;width:1.00px;height:15.00px;background:#4a4a4a;"></div>
<div class="a" style="left:778.00px;top:469.00px;width:1.00px;height:15.00px;background:#4a4a4a;"></div>
<div class="a" style="left:806.00px;top:469.00px;width:1.00px;height:15.00px;background:#4a4a4a;"></div>
<div class="a" style="left:833.00px;top:469.00px;width:1.00px;height:15.00px;background:#4a4a4a;"></div>
<div class="a" style="left:861.00px;top:469.00px;width:1.00px;height:15.00px;background:#4a4a4a;"></div>
<div class="a" style="left:251.00px;top:483.00px;width:1.00px;height:15.00px;background:#4a4a4a;"></div>
<div class="a" style="left:292.00px;top:483.00px;width:1.00px;height:15.00px;background:#4a4a4a;"></div>
<div class="a" style="left:318.00px;top:483.00px;width:1.00px;height:15.00px;background:#4a4a4a;"></div>
<div class="a" style="left:346.00px;top:483.00px;width:1.00px;height:15.00px;background:#4a4a4a;"></div>
<div class="a" style="left:373.00px;top:483.00px;width:1.00px;height:15.00px;background:#4a4a4a;"></div>
<div class="a" style="left:409.00px;top:483.00px;width:1.00px;height:15.00px;background:#4a4a4a;"></div>
<div class="a" style="left:437.00px;top:483.00px;width:1.00px;height:15.00px;background:#4a4a4a;"></div>
<div class="a" style="left:464.00px;top:483.00px;width:1.00px;height:15.00px;background:#4a4a4a;"></div>
<div class="a" style="left:491.00px;top:483.00px;width:1.00px;height:15.00px;background:#4a4a4a;"></div>
<div class="a" style="left:518.00px;top:483.00px;width:1.00px;height:15.00px;background:#4a4a4a;"></div>
<div class="a" style="left:545.00px;top:483.00px;width:1.00px;height:15.00px;background:#4a4a4a;"></div>
<div class="a" style="left:573.00px;top:483.00px;width:1.00px;height:15.00px;background:#4a4a4a;"></div>
<div class="a" style="left:600.00px;top:483.00px;width:1.00px;height:15.00px;background:#4a4a4a;"></div>
<div class="a" style="left:627.00px;top:483.00px;width:1.00px;height:15.00px;background:#4a4a4a;"></div>
<div class="a" style="left:655.00px;top:483.00px;width:1.00px;height:15.00px;background:#4a4a4a;"></div>
<div class="a" style="left:687.00px;top:483.00px;width:1.00px;height:15.00px;background:#4a4a4a;"></div>
<div class="a" style="left:714.00px;top:483.00px;width:1.00px;height:15.00px;background:#4a4a4a;"></div>
<div class="a" style="left:751.00px;top:483.00px;width:1.00px;height:15.00px;background:#4a4a4a;"></div>
<div class="a" style="left:778.00px;top:483.00px;width:1.00px;height:15.00px;background:#4a4a4a;"></div>
<div class="a" style="left:806.00px;top:483.00px;width:1.00px;height:15.00px;background:#4a4a4a;"></div>
<div class="a" style="left:833.00px;top:483.00px;width:1.00px;height:15.00px;background:#4a4a4a;"></div>
<div class="a" style="left:861.00px;top:483.00px;width:1.00px;height:15.00px;background:#4a4a4a;"></div>
<div class="a" style="left:251.00px;top:497.00px;width:1.00px;height:14.00px;background:#4a4a4a;"></div>
<div class="a" style="left:292.00px;top:497.00px;width:1.00px;height:14.00px;background:#4a4a4a;"></div>
<div class="a" style="left:318.00px;top:497.00px;width:1.00px;height:14.00px;background:#4a4a4a;"></div>
<div class="a" style="left:346.00px;top:497.00px;width:1.00px;height:14.00px;background:#4a4a4a;"></div>
<div class="a" style="left:373.00px;top:497.00px;width:1.00px;height:14.00px;background:#4a4a4a;"></div>
<div class="a" style="left:409.00px;top:497.00px;width:1.00px;height:14.00px;background:#4a4a4a;"></div>
<div class="a" style="left:437.00px;top:497.00px;width:1.00px;height:14.00px;background:#4a4a4a;"></div>
<div class="a" style="left:464.00px;top:497.00px;width:1.00px;height:14.00px;background:#4a4a4a;"></div>
<div class="a" style="left:491.00px;top:497.00px;width:1.00px;height:14.00px;background:#4a4a4a;"></div>
<div class="a" style="left:518.00px;top:497.00px;width:1.00px;height:14.00px;background:#4a4a4a;"></div>
<div class="a" style="left:545.00px;top:497.00px;width:1.00px;height:14.00px;background:#4a4a4a;"></div>
<div class="a" style="left:573.00px;top:497.00px;width:1.00px;height:14.00px;background:#4a4a4a;"></div>
<div class="a" style="left:600.00px;top:497.00px;width:1.00px;height:14.00px;background:#4a4a4a;"></div>
<div class="a" style="left:627.00px;top:497.00px;width:1.00px;height:14.00px;background:#4a4a4a;"></div>
<div class="a" style="left:655.00px;top:497.00px;width:1.00px;height:14.00px;background:#4a4a4a;"></div>
<div class="a" style="left:687.00px;top:497.00px;width:1.00px;height:14.00px;background:#4a4a4a;"></div>
<div class="a" style="left:714.00px;top:497.00px;width:1.00px;height:14.00px;background:#4a4a4a;"></div>
<div class="a" style="left:751.00px;top:497.00px;width:1.00px;height:14.00px;background:#4a4a4a;"></div>
<div class="a" style="left:778.00px;top:497.00px;width:1.00px;height:14.00px;background:#4a4a4a;"></div>
<div class="a" style="left:806.00px;top:497.00px;width:1.00px;height:14.00px;background:#4a4a4a;"></div>
<div class="a" style="left:833.00px;top:497.00px;width:1.00px;height:14.00px;background:#4a4a4a;"></div>
<div class="a" style="left:861.00px;top:497.00px;width:1.00px;height:14.00px;background:#4a4a4a;"></div>
<div class="a" style="left:251.00px;top:510.00px;width:1.00px;height:15.00px;background:#4a4a4a;"></div>
<div class="a" style="left:292.00px;top:510.00px;width:1.00px;height:15.00px;background:#4a4a4a;"></div>
<div class="a" style="left:318.00px;top:510.00px;width:1.00px;height:15.00px;background:#4a4a4a;"></div>
<div class="a" style="left:346.00px;top:510.00px;width:1.00px;height:15.00px;background:#4a4a4a;"></div>
<div class="a" style="left:373.00px;top:510.00px;width:1.00px;height:15.00px;background:#4a4a4a;"></div>
<div class="a" style="left:409.00px;top:510.00px;width:1.00px;height:15.00px;background:#4a4a4a;"></div>
<div class="a" style="left:437.00px;top:510.00px;width:1.00px;height:15.00px;background:#4a4a4a;"></div>
<div class="a" style="left:464.00px;top:510.00px;width:1.00px;height:15.00px;background:#4a4a4a;"></div>
<div class="a" style="left:491.00px;top:510.00px;width:1.00px;height:15.00px;background:#4a4a4a;"></div>
<div class="a" style="left:518.00px;top:510.00px;width:1.00px;height:15.00px;background:#4a4a4a;"></div>
<div class="a" style="left:545.00px;top:510.00px;width:1.00px;height:15.00px;background:#4a4a4a;"></div>
<div class="a" style="left:573.00px;top:510.00px;width:1.00px;height:15.00px;background:#4a4a4a;"></div>
<div class="a" style="left:600.00px;top:510.00px;width:1.00px;height:15.00px;background:#4a4a4a;"></div>
<div class="a" style="left:627.00px;top:510.00px;width:1.00px;height:15.00px;background:#4a4a4a;"></div>
<div class="a" style="left:655.00px;top:510.00px;width:1.00px;height:15.00px;background:#4a4a4a;"></div>
<div class="a" style="left:687.00px;top:510.00px;width:1.00px;height:15.00px;background:#4a4a4a;"></div>
<div class="a" style="left:714.00px;top:510.00px;width:1.00px;height:15.00px;background:#4a4a4a;"></div>
<div class="a" style="left:751.00px;top:510.00px;width:1.00px;height:15.00px;background:#4a4a4a;"></div>
<div class="a" style="left:778.00px;top:510.00px;width:1.00px;height:15.00px;background:#4a4a4a;"></div>
<div class="a" style="left:806.00px;top:510.00px;width:1.00px;height:15.00px;background:#4a4a4a;"></div>
<div class="a" style="left:833.00px;top:510.00px;width:1.00px;height:15.00px;background:#4a4a4a;"></div>
<div class="a" style="left:861.00px;top:510.00px;width:1.00px;height:15.00px;background:#4a4a4a;"></div>
<div class="a" style="left:251.00px;top:524.00px;width:1.00px;height:15.00px;background:#4a4a4a;"></div>
<div class="a" style="left:292.00px;top:524.00px;width:1.00px;height:15.00px;background:#4a4a4a;"></div>
<div class="a" style="left:318.00px;top:524.00px;width:1.00px;height:15.00px;background:#4a4a4a;"></div>
<div class="a" style="left:346.00px;top:524.00px;width:1.00px;height:15.00px;background:#4a4a4a;"></div>
<div class="a" style="left:373.00px;top:524.00px;width:1.00px;height:15.00px;background:#4a4a4a;"></div>
<div class="a" style="left:409.00px;top:524.00px;width:1.00px;height:15.00px;background:#4a4a4a;"></div>
<div class="a" style="left:437.00px;top:524.00px;width:1.00px;height:15.00px;background:#4a4a4a;"></div>
<div class="a" style="left:464.00px;top:524.00px;width:1.00px;height:15.00px;background:#4a4a4a;"></div>
<div class="a" style="left:491.00px;top:524.00px;width:1.00px;height:15.00px;background:#4a4a4a;"></div>
<div class="a" style="left:518.00px;top:524.00px;width:1.00px;height:15.00px;background:#4a4a4a;"></div>
<div class="a" style="left:545.00px;top:524.00px;width:1.00px;height:15.00px;background:#4a4a4a;"></div>
<div class="a" style="left:573.00px;top:524.00px;width:1.00px;height:15.00px;background:#4a4a4a;"></div>
<div class="a" style="left:600.00px;top:524.00px;width:1.00px;height:15.00px;background:#4a4a4a;"></div>
<div class="a" style="left:627.00px;top:524.00px;width:1.00px;height:15.00px;background:#4a4a4a;"></div>
<div class="a" style="left:655.00px;top:524.00px;width:1.00px;height:15.00px;background:#4a4a4a;"></div>
<div class="a" style="left:687.00px;top:524.00px;width:1.00px;height:15.00px;background:#4a4a4a;"></div>
<div class="a" style="left:714.00px;top:524.00px;width:1.00px;height:15.00px;background:#4a4a4a;"></div>
<div class="a" style="left:751.00px;top:524.00px;width:1.00px;height:15.00px;background:#4a4a4a;"></div>
<div class="a" style="left:778.00px;top:524.00px;width:1.00px;height:15.00px;background:#4a4a4a;"></div>
<div class="a" style="left:806.00px;top:524.00px;width:1.00px;height:15.00px;background:#4a4a4a;"></div>
<div class="a" style="left:833.00px;top:524.00px;width:1.00px;height:15.00px;background:#4a4a4a;"></div>
<div class="a" style="left:861.00px;top:524.00px;width:1.00px;height:15.00px;background:#4a4a4a;"></div>
<div class="a" style="left:251.00px;top:538.00px;width:1.00px;height:14.00px;background:#4a4a4a;"></div>
<div class="a" style="left:292.00px;top:538.00px;width:1.00px;height:14.00px;background:#4a4a4a;"></div>
<div class="a" style="left:318.00px;top:538.00px;width:1.00px;height:14.00px;background:#4a4a4a;"></div>
<div class="a" style="left:346.00px;top:538.00px;width:1.00px;height:14.00px;background:#4a4a4a;"></div>
<div class="a" style="left:373.00px;top:538.00px;width:1.00px;height:14.00px;background:#4a4a4a;"></div>
<div class="a" style="left:409.00px;top:538.00px;width:1.00px;height:14.00px;background:#4a4a4a;"></div>
<div class="a" style="left:437.00px;top:538.00px;width:1.00px;height:14.00px;background:#4a4a4a;"></div>
<div class="a" style="left:464.00px;top:538.00px;width:1.00px;height:14.00px;background:#4a4a4a;"></div>
<div class="a" style="left:491.00px;top:538.00px;width:1.00px;height:14.00px;background:#4a4a4a;"></div>
<div class="a" style="left:518.00px;top:538.00px;width:1.00px;height:14.00px;background:#4a4a4a;"></div>
<div class="a" style="left:545.00px;top:538.00px;width:1.00px;height:14.00px;background:#4a4a4a;"></div>
<div class="a" style="left:573.00px;top:538.00px;width:1.00px;height:14.00px;background:#4a4a4a;"></div>
<div class="a" style="left:600.00px;top:538.00px;width:1.00px;height:14.00px;background:#4a4a4a;"></div>
<div class="a" style="left:627.00px;top:538.00px;width:1.00px;height:14.00px;background:#4a4a4a;"></div>
<div class="a" style="left:655.00px;top:538.00px;width:1.00px;height:14.00px;background:#4a4a4a;"></div>
<div class="a" style="left:687.00px;top:538.00px;width:1.00px;height:14.00px;background:#4a4a4a;"></div>
<div class="a" style="left:714.00px;top:538.00px;width:1.00px;height:14.00px;background:#4a4a4a;"></div>
<div class="a" style="left:751.00px;top:538.00px;width:1.00px;height:14.00px;background:#4a4a4a;"></div>
<div class="a" style="left:778.00px;top:538.00px;width:1.00px;height:14.00px;background:#4a4a4a;"></div>
<div class="a" style="left:806.00px;top:538.00px;width:1.00px;height:14.00px;background:#4a4a4a;"></div>
<div class="a" style="left:833.00px;top:538.00px;width:1.00px;height:14.00px;background:#4a4a4a;"></div>
<div class="a" style="left:861.00px;top:538.00px;width:1.00px;height:14.00px;background:#4a4a4a;"></div>
<div class="a" style="left:251.00px;top:551.00px;width:1.00px;height:15.00px;background:#4a4a4a;"></div>
<div class="a" style="left:292.00px;top:551.00px;width:1.00px;height:15.00px;background:#4a4a4a;"></div>
<div class="a" style="left:318.00px;top:551.00px;width:1.00px;height:15.00px;background:#4a4a4a;"></div>
<div class="a" style="left:346.00px;top:551.00px;width:1.00px;height:15.00px;background:#4a4a4a;"></div>
<div class="a" style="left:373.00px;top:551.00px;width:1.00px;height:15.00px;background:#4a4a4a;"></div>
<div class="a" style="left:409.00px;top:551.00px;width:1.00px;height:15.00px;background:#4a4a4a;"></div>
<div class="a" style="left:437.00px;top:551.00px;width:1.00px;height:15.00px;background:#4a4a4a;"></div>
<div class="a" style="left:464.00px;top:551.00px;width:1.00px;height:15.00px;background:#4a4a4a;"></div>
<div class="a" style="left:491.00px;top:551.00px;width:1.00px;height:15.00px;background:#4a4a4a;"></div>
<div class="a" style="left:518.00px;top:551.00px;width:1.00px;height:15.00px;background:#4a4a4a;"></div>
<div class="a" style="left:545.00px;top:551.00px;width:1.00px;height:15.00px;background:#4a4a4a;"></div>
<div class="a" style="left:573.00px;top:551.00px;width:1.00px;height:15.00px;background:#4a4a4a;"></div>
<div class="a" style="left:600.00px;top:551.00px;width:1.00px;height:15.00px;background:#4a4a4a;"></div>
<div class="a" style="left:627.00px;top:551.00px;width:1.00px;height:15.00px;background:#4a4a4a;"></div>
<div class="a" style="left:655.00px;top:551.00px;width:1.00px;height:15.00px;background:#4a4a4a;"></div>
<div class="a" style="left:687.00px;top:551.00px;width:1.00px;height:15.00px;background:#4a4a4a;"></div>
<div class="a" style="left:714.00px;top:551.00px;width:1.00px;height:15.00px;background:#4a4a4a;"></div>
<div class="a" style="left:751.00px;top:551.00px;width:1.00px;height:15.00px;background:#4a4a4a;"></div>
<div class="a" style="left:778.00px;top:551.00px;width:1.00px;height:15.00px;background:#4a4a4a;"></div>
<div class="a" style="left:806.00px;top:551.00px;width:1.00px;height:15.00px;background:#4a4a4a;"></div>
<div class="a" style="left:833.00px;top:551.00px;width:1.00px;height:15.00px;background:#4a4a4a;"></div>
<div class="a" style="left:861.00px;top:551.00px;width:1.00px;height:15.00px;background:#4a4a4a;"></div>
<div class="a" style="left:224.00px;top:319.00px;width:638.00px;height:1.00px;background:#4a4a4a;"></div>
<div class="a" style="left:224.00px;top:333.00px;width:638.00px;height:1.00px;background:#4a4a4a;"></div>
<div class="a" style="left:224.00px;top:346.00px;width:638.00px;height:1.00px;background:#4a4a4a;"></div>
<div class="a" style="left:224.00px;top:360.00px;width:638.00px;height:1.00px;background:#4a4a4a;"></div>
<div class="a" style="left:224.00px;top:374.00px;width:638.00px;height:1.00px;background:#4a4a4a;"></div>
<div class="a" style="left:224.00px;top:387.00px;width:638.00px;height:1.00px;background:#4a4a4a;"></div>
<div class="a" style="left:224.00px;top:401.00px;width:638.00px;height:1.00px;background:#4a4a4a;"></div>
<div class="a" style="left:224.00px;top:415.00px;width:638.00px;height:1.00px;background:#4a4a4a;"></div>
<div class="a" style="left:224.00px;top:428.00px;width:638.00px;height:1.00px;background:#4a4a4a;"></div>
<div class="a" style="left:224.00px;top:442.00px;width:638.00px;height:1.00px;background:#4a4a4a;"></div>
<div class="a" style="left:224.00px;top:456.00px;width:638.00px;height:1.00px;background:#4a4a4a;"></div>
<div class="a" style="left:224.00px;top:469.00px;width:638.00px;height:1.00px;background:#4a4a4a;"></div>
<div class="a" style="left:224.00px;top:483.00px;width:638.00px;height:1.00px;background:#4a4a4a;"></div>
<div class="a" style="left:224.00px;top:497.00px;width:638.00px;height:1.00px;background:#4a4a4a;"></div>
<div class="a" style="left:224.00px;top:510.00px;width:638.00px;height:1.00px;background:#4a4a4a;"></div>
<div class="a" style="left:224.00px;top:524.00px;width:638.00px;height:1.00px;background:#4a4a4a;"></div>
<div class="a" style="left:224.00px;top:538.00px;width:638.00px;height:1.00px;background:#4a4a4a;"></div>
<div class="a" style="left:224.00px;top:551.00px;width:638.00px;height:1.00px;background:#4a4a4a;"></div>
<div class="a" style="left:224.00px;top:565.00px;width:638.00px;height:1.00px;background:#4a4a4a;"></div>
<div class="a" style="left:224.00px;top:579.00px;width:638.00px;height:1.00px;background:#4a4a4a;"></div>
<div class="a" style="left:224.00px;top:592.00px;width:638.00px;height:1.00px;background:#4a4a4a;"></div>
<div class="a" style="left:292.00px;top:428.00px;width:1.00px;height:15.00px;background:#4a4a4a;"></div>
<div class="a" style="left:346.00px;top:428.00px;width:1.00px;height:15.00px;background:#4a4a4a;"></div>
<div class="a" style="left:409.00px;top:428.00px;width:1.00px;height:15.00px;background:#4a4a4a;"></div>
<div class="a" style="left:464.00px;top:428.00px;width:1.00px;height:15.00px;background:#4a4a4a;"></div>
<div class="a" style="left:518.00px;top:428.00px;width:1.00px;height:15.00px;background:#4a4a4a;"></div>
<div class="a" style="left:573.00px;top:428.00px;width:1.00px;height:15.00px;background:#4a4a4a;"></div>
<div class="a" style="left:627.00px;top:428.00px;width:1.00px;height:15.00px;background:#4a4a4a;"></div>
<div class="a" style="left:687.00px;top:428.00px;width:1.00px;height:15.00px;background:#4a4a4a;"></div>
<div class="a" style="left:751.00px;top:428.00px;width:1.00px;height:15.00px;background:#4a4a4a;"></div>
<div class="a" style="left:806.00px;top:428.00px;width:1.00px;height:15.00px;background:#4a4a4a;"></div>
<div class="a" style="left:861.00px;top:428.00px;width:1.00px;height:15.00px;background:#4a4a4a;"></div>
<div class="a" style="left:292.00px;top:374.00px;width:1.00px;height:14.00px;background:#4a4a4a;"></div>
<div class="a" style="left:346.00px;top:374.00px;width:1.00px;height:14.00px;background:#4a4a4a;"></div>
<div class="a" style="left:409.00px;top:374.00px;width:1.00px;height:14.00px;background:#4a4a4a;"></div>
<div class="a" style="left:437.00px;top:374.00px;width:1.00px;height:14.00px;background:#4a4a4a;"></div>
<div class="a" style="left:464.00px;top:374.00px;width:1.00px;height:14.00px;background:#4a4a4a;"></div>
<div class="a" style="left:491.00px;top:374.00px;width:1.00px;height:14.00px;background:#4a4a4a;"></div>
<div class="a" style="left:518.00px;top:374.00px;width:1.00px;height:14.00px;background:#4a4a4a;"></div>
<div class="a" style="left:545.00px;top:374.00px;width:1.00px;height:14.00px;background:#4a4a4a;"></div>
<div class="a" style="left:573.00px;top:374.00px;width:1.00px;height:14.00px;background:#4a4a4a;"></div>
<div class="a" style="left:600.00px;top:374.00px;width:1.00px;height:14.00px;background:#4a4a4a;"></div>
<div class="a" style="left:627.00px;top:374.00px;width:1.00px;height:14.00px;background:#4a4a4a;"></div>
<div class="a" style="left:655.00px;top:374.00px;width:1.00px;height:14.00px;background:#4a4a4a;"></div>
<div class="a" style="left:687.00px;top:374.00px;width:1.00px;height:14.00px;background:#4a4a4a;"></div>
<div class="a" style="left:714.00px;top:374.00px;width:1.00px;height:14.00px;background:#4a4a4a;"></div>
<div class="a" style="left:751.00px;top:374.00px;width:1.00px;height:14.00px;background:#4a4a4a;"></div>
<div class="a" style="left:778.00px;top:374.00px;width:1.00px;height:14.00px;background:#4a4a4a;"></div>
<div class="a" style="left:806.00px;top:374.00px;width:1.00px;height:14.00px;background:#4a4a4a;"></div>
<div class="a" style="left:833.00px;top:374.00px;width:1.00px;height:14.00px;background:#4a4a4a;"></div>
<div class="a" style="left:861.00px;top:374.00px;width:1.00px;height:14.00px;background:#4a4a4a;"></div>
<div class="a" style="left:251.00px;top:565.00px;width:1.00px;height:15.00px;background:#4a4a4a;"></div>
<div class="a" style="left:292.00px;top:565.00px;width:1.00px;height:15.00px;background:#4a4a4a;"></div>
<div class="a" style="left:318.00px;top:565.00px;width:1.00px;height:15.00px;background:#4a4a4a;"></div>
<div class="a" style="left:346.00px;top:565.00px;width:1.00px;height:15.00px;background:#4a4a4a;"></div>
<div class="a" style="left:373.00px;top:565.00px;width:1.00px;height:15.00px;background:#4a4a4a;"></div>
<div class="a" style="left:409.00px;top:565.00px;width:1.00px;height:15.00px;background:#4a4a4a;"></div>
<div class="a" style="left:437.00px;top:565.00px;width:1.00px;height:15.00px;background:#4a4a4a;"></div>
<div class="a" style="left:464.00px;top:565.00px;width:1.00px;height:15.00px;background:#4a4a4a;"></div>
<div class="a" style="left:491.00px;top:565.00px;width:1.00px;height:15.00px;background:#4a4a4a;"></div>
<div class="a" style="left:518.00px;top:565.00px;width:1.00px;height:15.00px;background:#4a4a4a;"></div>
<div class="a" style="left:545.00px;top:565.00px;width:1.00px;height:15.00px;background:#4a4a4a;"></div>
<div class="a" style="left:573.00px;top:565.00px;width:1.00px;height:15.00px;background:#4a4a4a;"></div>
<div class="a" style="left:600.00px;top:565.00px;width:1.00px;height:15.00px;background:#4a4a4a;"></div>
<div class="a" style="left:627.00px;top:565.00px;width:1.00px;height:15.00px;background:#4a4a4a;"></div>
<div class="a" style="left:655.00px;top:565.00px;width:1.00px;height:15.00px;background:#4a4a4a;"></div>
<div class="a" style="left:687.00px;top:565.00px;width:1.00px;height:15.00px;background:#4a4a4a;"></div>
<div class="a" style="left:714.00px;top:565.00px;width:1.00px;height:15.00px;background:#4a4a4a;"></div>
<div class="a" style="left:751.00px;top:565.00px;width:1.00px;height:15.00px;background:#4a4a4a;"></div>
<div class="a" style="left:778.00px;top:565.00px;width:1.00px;height:15.00px;background:#4a4a4a;"></div>
<div class="a" style="left:806.00px;top:565.00px;width:1.00px;height:15.00px;background:#4a4a4a;"></div>
<div class="a" style="left:833.00px;top:565.00px;width:1.00px;height:15.00px;background:#4a4a4a;"></div>
<div class="a" style="left:861.00px;top:565.00px;width:1.00px;height:15.00px;background:#4a4a4a;"></div>
<div class="a" style="left:409.00px;top:387.00px;width:1.00px;height:15.00px;background:#4a4a4a;"></div>
<div class="a" style="left:518.00px;top:387.00px;width:1.00px;height:15.00px;background:#4a4a4a;"></div>
<div class="a" style="left:627.00px;top:387.00px;width:1.00px;height:15.00px;background:#4a4a4a;"></div>
<div class="a" style="left:751.00px;top:387.00px;width:1.00px;height:15.00px;background:#4a4a4a;"></div>
<div class="a" style="left:861.00px;top:387.00px;width:1.00px;height:15.00px;background:#4a4a4a;"></div>
<div class="a" style="left:464.00px;top:415.00px;width:1.00px;height:14.00px;background:#4a4a4a;"></div>
<div class="a" style="left:573.00px;top:415.00px;width:1.00px;height:14.00px;background:#4a4a4a;"></div>
<div class="a" style="left:861.00px;top:415.00px;width:1.00px;height:14.00px;background:#4a4a4a;"></div>
<div class="a" style="left:464.00px;top:579.00px;width:1.00px;height:14.00px;background:#4a4a4a;"></div>
<div class="a" style="left:573.00px;top:579.00px;width:1.00px;height:14.00px;background:#4a4a4a;"></div>
<div class="a" style="left:861.00px;top:579.00px;width:1.00px;height:14.00px;background:#4a4a4a;"></div>
<div class="t" style="left:231.15px;top:309.09px;font-size:8.99px;color:#111;transform:scaleX(0.9000);-webkit-text-stroke:0.22px #111;">100</div>
<div class="t" style="left:269.65px;top:309.09px;font-size:8.99px;color:#2a2a2a;transform:scaleX(0.9000);-webkit-text-stroke:0.45px #2a2a2a;">3</div>
<div class="t" style="left:298.80px;top:309.09px;font-size:8.99px;color:#111;transform:scaleX(0.9000);-webkit-text-stroke:0.22px #111;">101</div>
<div class="t" style="left:330.35px;top:309.09px;font-size:8.99px;color:#2a2a2a;transform:scaleX(0.9000);-webkit-text-stroke:0.45px #2a2a2a;">0</div>
<div class="t" style="left:355.20px;top:309.09px;font-size:8.99px;color:#111;transform:scaleX(0.9000);-webkit-text-stroke:0.22px #111;">99</div>
<div class="t" style="left:389.15px;top:309.09px;font-size:8.99px;color:#2a2a2a;transform:scaleX(0.9000);-webkit-text-stroke:0.45px #2a2a2a;">0</div>
<div class="t" style="left:419.00px;top:309.09px;font-size:8.99px;color:#111;transform:scaleX(0.9000);-webkit-text-stroke:0.22px #111;">88</div>
<div class="t" style="left:448.65px;top:309.09px;font-size:8.99px;color:#2a2a2a;transform:scaleX(0.9000);-webkit-text-stroke:0.45px #2a2a2a;">0</div>
<div class="t" style="left:473.65px;top:309.09px;font-size:8.99px;color:#111;transform:scaleX(0.9000);-webkit-text-stroke:0.22px #111;">87</div>
<div class="t" style="left:502.90px;top:309.09px;font-size:8.99px;color:#2a2a2a;transform:scaleX(0.9000);-webkit-text-stroke:0.45px #2a2a2a;">0</div>
<div class="t" style="left:525.65px;top:309.09px;font-size:8.99px;color:#111;transform:scaleX(0.9000);-webkit-text-stroke:0.22px #111;">116</div>
<div class="t" style="left:557.20px;top:309.09px;font-size:8.99px;color:#2a2a2a;transform:scaleX(0.9000);-webkit-text-stroke:0.45px #2a2a2a;">0</div>
<div class="t" style="left:580.55px;top:309.09px;font-size:8.99px;color:#111;transform:scaleX(0.9000);-webkit-text-stroke:0.22px #111;">117</div>
<div class="t" style="left:611.90px;top:309.09px;font-size:8.99px;color:#2a2a2a;transform:scaleX(0.9000);-webkit-text-stroke:0.45px #2a2a2a;">0</div>
<div class="t" style="left:636.95px;top:309.09px;font-size:8.99px;color:#111;transform:scaleX(0.9000);-webkit-text-stroke:0.22px #111;">95</div>
<div class="t" style="left:669.30px;top:309.09px;font-size:8.99px;color:#2a2a2a;transform:scaleX(0.9000);-webkit-text-stroke:0.45px #2a2a2a;">0</div>
<div class="t" style="left:696.75px;top:309.09px;font-size:8.99px;color:#111;transform:scaleX(0.9000);-webkit-text-stroke:0.22px #111;">96</div>
<div class="t" style="left:730.80px;top:309.09px;font-size:8.99px;color:#2a2a2a;transform:scaleX(0.9000);-webkit-text-stroke:0.45px #2a2a2a;">0</div>
<div class="t" style="left:758.65px;top:309.09px;font-size:8.99px;color:#111;transform:scaleX(0.9000);-webkit-text-stroke:0.22px #111;">119</div>
<div class="t" style="left:790.25px;top:309.09px;font-size:8.99px;color:#2a2a2a;transform:scaleX(0.9000);-webkit-text-stroke:0.45px #2a2a2a;">0</div>
<div class="t" style="left:813.35px;top:309.09px;font-size:8.99px;color:#111;transform:scaleX(0.9000);-webkit-text-stroke:0.22px #111;">118</div>
<div class="t" style="left:845.10px;top:309.09px;font-size:8.99px;color:#2a2a2a;transform:scaleX(0.9000);-webkit-text-stroke:0.45px #2a2a2a;">0</div>
<div class="t" style="left:231.45px;top:322.77px;font-size:8.99px;color:#111;transform:scaleX(0.9000);-webkit-text-stroke:0.22px #111;">115</div>
<div class="t" style="left:269.65px;top:322.77px;font-size:8.99px;color:#2a2a2a;transform:scaleX(0.9000);-webkit-text-stroke:0.45px #2a2a2a;">0</div>
<div class="t" style="left:299.10px;top:322.77px;font-size:8.99px;color:#111;transform:scaleX(0.9000);-webkit-text-stroke:0.22px #111;">114</div>
<div class="t" style="left:330.35px;top:322.77px;font-size:8.99px;color:#2a2a2a;transform:scaleX(0.9000);-webkit-text-stroke:0.45px #2a2a2a;">0</div>
<div class="t" style="left:353.25px;top:322.77px;font-size:8.99px;color:#111;transform:scaleX(0.9000);-webkit-text-stroke:0.22px #111;">113</div>
<div class="t" style="left:389.15px;top:322.77px;font-size:8.99px;color:#2a2a2a;transform:scaleX(0.9000);-webkit-text-stroke:0.45px #2a2a2a;">0</div>
<div class="t" style="left:419.00px;top:322.77px;font-size:8.99px;color:#111;transform:scaleX(0.9000);-webkit-text-stroke:0.22px #111;">91</div>
<div class="t" style="left:448.65px;top:322.77px;font-size:8.99px;color:#2a2a2a;transform:scaleX(0.9000);-webkit-text-stroke:0.45px #2a2a2a;">0</div>
<div class="t" style="left:473.65px;top:322.77px;font-size:8.99px;color:#111;transform:scaleX(0.9000);-webkit-text-stroke:0.22px #111;">92</div>
<div class="t" style="left:502.90px;top:322.77px;font-size:8.99px;color:#2a2a2a;transform:scaleX(0.9000);-webkit-text-stroke:0.45px #2a2a2a;">0</div>
<div class="t" style="left:525.35px;top:322.77px;font-size:8.99px;color:#111;transform:scaleX(0.9000);-webkit-text-stroke:0.22px #111;">121</div>
<div class="t" style="left:557.20px;top:322.77px;font-size:8.99px;color:#2a2a2a;transform:scaleX(0.9000);-webkit-text-stroke:0.45px #2a2a2a;">0</div>
<div class="t" style="left:580.25px;top:322.77px;font-size:8.99px;color:#111;transform:scaleX(0.9000);-webkit-text-stroke:0.22px #111;">120</div>
<div class="t" style="left:611.90px;top:322.77px;font-size:8.99px;color:#2a2a2a;transform:scaleX(0.9000);-webkit-text-stroke:0.45px #2a2a2a;">0</div>
<div class="t" style="left:634.70px;top:322.77px;font-size:8.99px;color:#111;transform:scaleX(0.9000);-webkit-text-stroke:0.22px #111;">127</div>
<div class="t" style="left:669.30px;top:322.77px;font-size:8.99px;color:#2a2a2a;transform:scaleX(0.9000);-webkit-text-stroke:0.45px #2a2a2a;">0</div>
<div class="t" style="left:694.50px;top:322.77px;font-size:8.99px;color:#111;transform:scaleX(0.9000);-webkit-text-stroke:0.22px #111;">126</div>
<div class="t" style="left:730.80px;top:322.77px;font-size:8.99px;color:#2a2a2a;transform:scaleX(0.9000);-webkit-text-stroke:0.45px #2a2a2a;">0</div>
<div class="t" style="left:758.35px;top:322.77px;font-size:8.99px;color:#111;transform:scaleX(0.9000);-webkit-text-stroke:0.22px #111;">139</div>
<div class="t" style="left:790.25px;top:322.77px;font-size:8.99px;color:#2a2a2a;transform:scaleX(0.9000);-webkit-text-stroke:0.45px #2a2a2a;">0</div>
<div class="t" style="left:813.05px;top:322.77px;font-size:8.99px;color:#111;transform:scaleX(0.9000);-webkit-text-stroke:0.22px #111;">140</div>
<div class="t" style="left:845.10px;top:322.77px;font-size:8.99px;color:#2a2a2a;transform:scaleX(0.9000);-webkit-text-stroke:0.45px #2a2a2a;">0</div>
<div class="t" style="left:231.15px;top:336.45px;font-size:8.99px;color:#111;transform:scaleX(0.9000);-webkit-text-stroke:0.22px #111;">153</div>
<div class="t" style="left:269.65px;top:336.45px;font-size:8.99px;color:#2a2a2a;transform:scaleX(0.9000);-webkit-text-stroke:0.45px #2a2a2a;">0</div>
<div class="t" style="left:298.80px;top:336.45px;font-size:8.99px;color:#111;transform:scaleX(0.9000);-webkit-text-stroke:0.22px #111;">154</div>
<div class="t" style="left:330.35px;top:336.45px;font-size:8.99px;color:#2a2a2a;transform:scaleX(0.9000);-webkit-text-stroke:0.45px #2a2a2a;">0</div>
<div class="t" style="left:352.95px;top:336.45px;font-size:8.99px;color:#111;transform:scaleX(0.9000);-webkit-text-stroke:0.22px #111;">155</div>
<div class="t" style="left:389.15px;top:336.45px;font-size:8.99px;color:#2a2a2a;transform:scaleX(0.9000);-webkit-text-stroke:0.45px #2a2a2a;">0</div>
<div class="t" style="left:419.00px;top:336.45px;font-size:8.99px;color:#111;transform:scaleX(0.9000);-webkit-text-stroke:0.22px #111;">97</div>
<div class="t" style="left:448.65px;top:336.45px;font-size:8.99px;color:#2a2a2a;transform:scaleX(0.9000);-webkit-text-stroke:0.45px #2a2a2a;">0</div>
<div class="t" style="left:473.65px;top:336.45px;font-size:8.99px;color:#111;transform:scaleX(0.9000);-webkit-text-stroke:0.22px #111;">98</div>
<div class="t" style="left:502.90px;top:336.45px;font-size:8.99px;color:#2a2a2a;transform:scaleX(0.9000);-webkit-text-stroke:0.45px #2a2a2a;">0</div>
<div class="t" style="left:525.35px;top:336.45px;font-size:8.99px;color:#111;transform:scaleX(0.9000);-webkit-text-stroke:0.22px #111;">141</div>
<div class="t" style="left:557.20px;top:336.45px;font-size:8.99px;color:#2a2a2a;transform:scaleX(0.9000);-webkit-text-stroke:0.45px #2a2a2a;">0</div>
<div class="t" style="left:580.25px;top:336.45px;font-size:8.99px;color:#111;transform:scaleX(0.9000);-webkit-text-stroke:0.22px #111;">142</div>
<div class="t" style="left:611.90px;top:336.45px;font-size:8.99px;color:#2a2a2a;transform:scaleX(0.9000);-webkit-text-stroke:0.45px #2a2a2a;">0</div>
<div class="t" style="left:634.70px;top:336.45px;font-size:8.99px;color:#111;transform:scaleX(0.9000);-webkit-text-stroke:0.22px #111;">144</div>
<div class="t" style="left:669.30px;top:336.45px;font-size:8.99px;color:#2a2a2a;transform:scaleX(0.9000);-webkit-text-stroke:0.45px #2a2a2a;">0</div>
<div class="t" style="left:694.50px;top:336.45px;font-size:8.99px;color:#111;transform:scaleX(0.9000);-webkit-text-stroke:0.22px #111;">143</div>
<div class="t" style="left:730.80px;top:336.45px;font-size:8.99px;color:#2a2a2a;transform:scaleX(0.9000);-webkit-text-stroke:0.45px #2a2a2a;">0</div>
<div class="t" style="left:758.35px;top:336.45px;font-size:8.99px;color:#111;transform:scaleX(0.9000);-webkit-text-stroke:0.22px #111;">145</div>
<div class="t" style="left:790.25px;top:336.45px;font-size:8.99px;color:#2a2a2a;transform:scaleX(0.9000);-webkit-text-stroke:0.45px #2a2a2a;">0</div>
<div class="t" style="left:813.05px;top:336.45px;font-size:8.99px;color:#111;transform:scaleX(0.9000);-webkit-text-stroke:0.22px #111;">146</div>
<div class="t" style="left:845.10px;top:336.45px;font-size:8.99px;color:#2a2a2a;transform:scaleX(0.9000);-webkit-text-stroke:0.45px #2a2a2a;">0</div>
<div class="t" style="left:231.15px;top:350.13px;font-size:8.99px;color:#111;transform:scaleX(0.9000);-webkit-text-stroke:0.22px #111;">169</div>
<div class="t" style="left:269.65px;top:350.13px;font-size:8.99px;color:#2a2a2a;transform:scaleX(0.9000);-webkit-text-stroke:0.45px #2a2a2a;">0</div>
<div class="t" style="left:298.80px;top:350.13px;font-size:8.99px;color:#111;transform:scaleX(0.9000);-webkit-text-stroke:0.22px #111;">170</div>
<div class="t" style="left:330.35px;top:350.13px;font-size:8.99px;color:#2a2a2a;transform:scaleX(0.9000);-webkit-text-stroke:0.45px #2a2a2a;">0</div>
<div class="t" style="left:352.95px;top:350.13px;font-size:8.99px;color:#111;transform:scaleX(0.9000);-webkit-text-stroke:0.22px #111;">171</div>
<div class="t" style="left:389.15px;top:350.13px;font-size:8.99px;color:#2a2a2a;transform:scaleX(0.9000);-webkit-text-stroke:0.45px #2a2a2a;">0</div>
<div class="t" style="left:416.75px;top:350.13px;font-size:8.99px;color:#111;transform:scaleX(0.9000);-webkit-text-stroke:0.22px #111;">156</div>
<div class="t" style="left:448.65px;top:350.13px;font-size:8.99px;color:#2a2a2a;transform:scaleX(0.9000);-webkit-text-stroke:0.45px #2a2a2a;">0</div>
<div class="t" style="left:471.40px;top:350.13px;font-size:8.99px;color:#111;transform:scaleX(0.9000);-webkit-text-stroke:0.22px #111;">157</div>
<div class="t" style="left:502.90px;top:350.13px;font-size:8.99px;color:#2a2a2a;transform:scaleX(0.9000);-webkit-text-stroke:0.45px #2a2a2a;">0</div>
<div class="t" style="left:525.35px;top:350.13px;font-size:8.99px;color:#111;transform:scaleX(0.9000);-webkit-text-stroke:0.22px #111;">150</div>
<div class="t" style="left:557.20px;top:350.13px;font-size:8.99px;color:#2a2a2a;transform:scaleX(0.9000);-webkit-text-stroke:0.45px #2a2a2a;">0</div>
<div class="t" style="left:580.25px;top:350.13px;font-size:8.99px;color:#111;transform:scaleX(0.9000);-webkit-text-stroke:0.22px #111;">149</div>
<div class="t" style="left:611.90px;top:350.13px;font-size:8.99px;color:#2a2a2a;transform:scaleX(0.9000);-webkit-text-stroke:0.45px #2a2a2a;">0</div>
<div class="t" style="left:634.70px;top:350.13px;font-size:8.99px;color:#111;transform:scaleX(0.9000);-webkit-text-stroke:0.22px #111;">148</div>
<div class="t" style="left:669.30px;top:350.13px;font-size:8.99px;color:#2a2a2a;transform:scaleX(0.9000);-webkit-text-stroke:0.45px #2a2a2a;">0</div>
<div class="t" style="left:694.50px;top:350.13px;font-size:8.99px;color:#111;transform:scaleX(0.9000);-webkit-text-stroke:0.22px #111;">147</div>
<div class="t" style="left:730.80px;top:350.13px;font-size:8.99px;color:#2a2a2a;transform:scaleX(0.9000);-webkit-text-stroke:0.45px #2a2a2a;">0</div>
<div class="t" style="left:758.35px;top:350.13px;font-size:8.99px;color:#111;transform:scaleX(0.9000);-webkit-text-stroke:0.22px #111;">175</div>
<div class="t" style="left:790.25px;top:350.13px;font-size:8.99px;color:#2a2a2a;transform:scaleX(0.9000);-webkit-text-stroke:0.45px #2a2a2a;">0</div>
<div class="t" style="left:813.05px;top:350.13px;font-size:8.99px;color:#111;transform:scaleX(0.9000);-webkit-text-stroke:0.22px #111;">174</div>
<div class="t" style="left:845.10px;top:350.13px;font-size:8.99px;color:#2a2a2a;transform:scaleX(0.9000);-webkit-text-stroke:0.45px #2a2a2a;">0</div>
<div class="t" style="left:231.15px;top:363.81px;font-size:8.99px;color:#111;transform:scaleX(0.9000);-webkit-text-stroke:0.22px #111;">178</div>
<div class="t" style="left:269.65px;top:363.81px;font-size:8.99px;color:#2a2a2a;transform:scaleX(0.9000);-webkit-text-stroke:0.45px #2a2a2a;">0</div>
<div class="t" style="left:298.80px;top:363.81px;font-size:8.99px;color:#111;transform:scaleX(0.9000);-webkit-text-stroke:0.22px #111;">176</div>
<div class="t" style="left:330.35px;top:363.81px;font-size:8.99px;color:#2a2a2a;transform:scaleX(0.9000);-webkit-text-stroke:0.45px #2a2a2a;">0</div>
<div class="t" style="left:352.95px;top:363.81px;font-size:8.99px;color:#111;transform:scaleX(0.9000);-webkit-text-stroke:0.22px #111;">177</div>
<div class="t" style="left:389.15px;top:363.81px;font-size:8.99px;color:#2a2a2a;transform:scaleX(0.9000);-webkit-text-stroke:0.45px #2a2a2a;">0</div>
<div class="t" style="left:416.75px;top:363.81px;font-size:8.99px;color:#111;transform:scaleX(0.9000);-webkit-text-stroke:0.22px #111;">197</div>
<div class="t" style="left:448.65px;top:363.81px;font-size:8.99px;color:#2a2a2a;transform:scaleX(0.9000);-webkit-text-stroke:0.45px #2a2a2a;">0</div>
<div class="t" style="left:471.40px;top:363.81px;font-size:8.99px;color:#111;transform:scaleX(0.9000);-webkit-text-stroke:0.22px #111;">198</div>
<div class="t" style="left:502.90px;top:363.81px;font-size:8.99px;color:#2a2a2a;transform:scaleX(0.9000);-webkit-text-stroke:0.45px #2a2a2a;">0</div>
<div class="t" style="left:525.35px;top:363.81px;font-size:8.99px;color:#111;transform:scaleX(0.9000);-webkit-text-stroke:0.22px #111;">151</div>
<div class="t" style="left:557.20px;top:363.81px;font-size:8.99px;color:#2a2a2a;transform:scaleX(0.9000);-webkit-text-stroke:0.45px #2a2a2a;">0</div>
<div class="t" style="left:580.25px;top:363.81px;font-size:8.99px;color:#111;transform:scaleX(0.9000);-webkit-text-stroke:0.22px #111;">152</div>
<div class="t" style="left:611.90px;top:363.81px;font-size:8.99px;color:#2a2a2a;transform:scaleX(0.9000);-webkit-text-stroke:0.45px #2a2a2a;">0</div>
<div class="t" style="left:634.70px;top:363.81px;font-size:8.99px;color:#111;transform:scaleX(0.9000);-webkit-text-stroke:0.22px #111;">168</div>
<div class="t" style="left:669.30px;top:363.81px;font-size:8.99px;color:#2a2a2a;transform:scaleX(0.9000);-webkit-text-stroke:0.45px #2a2a2a;">0</div>
<div class="t" style="left:694.50px;top:363.81px;font-size:8.99px;color:#111;transform:scaleX(0.9000);-webkit-text-stroke:0.22px #111;">167</div>
<div class="t" style="left:730.80px;top:363.81px;font-size:8.99px;color:#2a2a2a;transform:scaleX(0.9000);-webkit-text-stroke:0.45px #2a2a2a;">0</div>
<div class="t" style="left:758.35px;top:363.81px;font-size:8.99px;color:#111;transform:scaleX(0.9000);-webkit-text-stroke:0.22px #111;">183</div>
<div class="t" style="left:790.25px;top:363.81px;font-size:8.99px;color:#2a2a2a;transform:scaleX(0.9000);-webkit-text-stroke:0.45px #2a2a2a;">0</div>
<div class="t" style="left:813.05px;top:363.81px;font-size:8.99px;color:#111;transform:scaleX(0.9000);-webkit-text-stroke:0.22px #111;">184</div>
<div class="t" style="left:845.10px;top:363.81px;font-size:8.99px;color:#2a2a2a;transform:scaleX(0.9000);-webkit-text-stroke:0.45px #2a2a2a;">0</div>
<div class="t" style="left:233.40px;top:445.89px;font-size:8.99px;color:#111;transform:scaleX(0.9000);-webkit-text-stroke:0.22px #111;">15</div>
<div class="t" style="left:269.65px;top:445.89px;font-size:8.99px;color:#2a2a2a;transform:scaleX(0.9000);-webkit-text-stroke:0.45px #2a2a2a;">0</div>
<div class="t" style="left:301.05px;top:445.89px;font-size:8.99px;color:#111;transform:scaleX(0.9000);-webkit-text-stroke:0.22px #111;">13</div>
<div class="t" style="left:330.35px;top:445.89px;font-size:8.99px;color:#2a2a2a;transform:scaleX(0.9000);-webkit-text-stroke:0.45px #2a2a2a;">0</div>
<div class="t" style="left:355.20px;top:445.89px;font-size:8.99px;color:#111;transform:scaleX(0.9000);-webkit-text-stroke:0.22px #111;">12</div>
<div class="t" style="left:389.15px;top:445.89px;font-size:8.99px;color:#2a2a2a;transform:scaleX(0.9000);-webkit-text-stroke:0.45px #2a2a2a;">0</div>
<div class="t" style="left:419.00px;top:445.89px;font-size:8.99px;color:#111;transform:scaleX(0.9000);-webkit-text-stroke:0.22px #111;">14</div>
<div class="t" style="left:448.65px;top:445.89px;font-size:8.99px;color:#2a2a2a;transform:scaleX(0.9000);-webkit-text-stroke:0.45px #2a2a2a;">0</div>
<div class="t" style="left:473.65px;top:445.89px;font-size:8.99px;color:#111;transform:scaleX(0.9000);-webkit-text-stroke:0.22px #111;">16</div>
<div class="t" style="left:502.90px;top:445.89px;font-size:8.99px;color:#2a2a2a;transform:scaleX(0.9000);-webkit-text-stroke:0.45px #2a2a2a;">0</div>
<div class="t" style="left:527.60px;top:445.89px;font-size:8.99px;color:#111;transform:scaleX(0.9000);-webkit-text-stroke:0.22px #111;">17</div>
<div class="t" style="left:557.20px;top:445.89px;font-size:8.99px;color:#2a2a2a;transform:scaleX(0.9000);-webkit-text-stroke:0.45px #2a2a2a;">0</div>
<div class="t" style="left:582.50px;top:445.89px;font-size:8.99px;color:#111;transform:scaleX(0.9000);-webkit-text-stroke:0.22px #111;">19</div>
<div class="t" style="left:611.90px;top:445.89px;font-size:8.99px;color:#2a2a2a;transform:scaleX(0.9000);-webkit-text-stroke:0.45px #2a2a2a;">0</div>
<div class="t" style="left:636.95px;top:445.89px;font-size:8.99px;color:#111;transform:scaleX(0.9000);-webkit-text-stroke:0.22px #111;">18</div>
<div class="t" style="left:669.30px;top:445.89px;font-size:8.99px;color:#2a2a2a;transform:scaleX(0.9000);-webkit-text-stroke:0.45px #2a2a2a;">0</div>
<div class="t" style="left:696.75px;top:445.89px;font-size:8.99px;color:#111;transform:scaleX(0.9000);-webkit-text-stroke:0.22px #111;">21</div>
<div class="t" style="left:730.80px;top:445.89px;font-size:8.99px;color:#2a2a2a;transform:scaleX(0.9000);-webkit-text-stroke:0.45px #2a2a2a;">0</div>
<div class="t" style="left:760.60px;top:445.89px;font-size:8.99px;color:#111;transform:scaleX(0.9000);-webkit-text-stroke:0.22px #111;">22</div>
<div class="t" style="left:790.25px;top:445.89px;font-size:8.99px;color:#2a2a2a;transform:scaleX(0.9000);-webkit-text-stroke:0.45px #2a2a2a;">0</div>
<div class="t" style="left:815.30px;top:445.89px;font-size:8.99px;color:#111;transform:scaleX(0.9000);-webkit-text-stroke:0.22px #111;">20</div>
<div class="t" style="left:845.10px;top:445.89px;font-size:8.99px;color:#2a2a2a;transform:scaleX(0.9000);-webkit-text-stroke:0.45px #2a2a2a;">0</div>
<div class="t" style="left:233.40px;top:459.57px;font-size:8.99px;color:#111;transform:scaleX(0.9000);-webkit-text-stroke:0.22px #111;">37</div>
<div class="t" style="left:269.65px;top:459.57px;font-size:8.99px;color:#2a2a2a;transform:scaleX(0.9000);-webkit-text-stroke:0.45px #2a2a2a;">0</div>
<div class="t" style="left:301.05px;top:459.57px;font-size:8.99px;color:#111;transform:scaleX(0.9000);-webkit-text-stroke:0.22px #111;">36</div>
<div class="t" style="left:330.35px;top:459.57px;font-size:8.99px;color:#2a2a2a;transform:scaleX(0.9000);-webkit-text-stroke:0.45px #2a2a2a;">0</div>
<div class="t" style="left:355.20px;top:459.57px;font-size:8.99px;color:#111;transform:scaleX(0.9000);-webkit-text-stroke:0.22px #111;">34</div>
<div class="t" style="left:389.15px;top:459.57px;font-size:8.99px;color:#2a2a2a;transform:scaleX(0.9000);-webkit-text-stroke:0.45px #2a2a2a;">0</div>
<div class="t" style="left:419.00px;top:459.57px;font-size:8.99px;color:#111;transform:scaleX(0.9000);-webkit-text-stroke:0.22px #111;">35</div>
<div class="t" style="left:448.65px;top:459.57px;font-size:8.99px;color:#2a2a2a;transform:scaleX(0.9000);-webkit-text-stroke:0.45px #2a2a2a;">0</div>
<div class="t" style="left:473.65px;top:459.57px;font-size:8.99px;color:#111;transform:scaleX(0.9000);-webkit-text-stroke:0.22px #111;">39</div>
<div class="t" style="left:502.90px;top:459.57px;font-size:8.99px;color:#2a2a2a;transform:scaleX(0.9000);-webkit-text-stroke:0.45px #2a2a2a;">0</div>
<div class="t" style="left:527.60px;top:459.57px;font-size:8.99px;color:#111;transform:scaleX(0.9000);-webkit-text-stroke:0.22px #111;">38</div>
<div class="t" style="left:557.20px;top:459.57px;font-size:8.99px;color:#2a2a2a;transform:scaleX(0.9000);-webkit-text-stroke:0.45px #2a2a2a;">0</div>
<div class="t" style="left:582.50px;top:459.57px;font-size:8.99px;color:#111;transform:scaleX(0.9000);-webkit-text-stroke:0.22px #111;">40</div>
<div class="t" style="left:611.90px;top:459.57px;font-size:8.99px;color:#2a2a2a;transform:scaleX(0.9000);-webkit-text-stroke:0.45px #2a2a2a;">0</div>
<div class="t" style="left:636.95px;top:459.57px;font-size:8.99px;color:#111;transform:scaleX(0.9000);-webkit-text-stroke:0.22px #111;">41</div>
<div class="t" style="left:669.30px;top:459.57px;font-size:8.99px;color:#2a2a2a;transform:scaleX(0.9000);-webkit-text-stroke:0.45px #2a2a2a;">0</div>
<div class="t" style="left:696.75px;top:459.57px;font-size:8.99px;color:#111;transform:scaleX(0.9000);-webkit-text-stroke:0.22px #111;">43</div>
<div class="t" style="left:730.80px;top:459.57px;font-size:8.99px;color:#2a2a2a;transform:scaleX(0.9000);-webkit-text-stroke:0.45px #2a2a2a;">0</div>
<div class="t" style="left:760.60px;top:459.57px;font-size:8.99px;color:#111;transform:scaleX(0.9000);-webkit-text-stroke:0.22px #111;">44</div>
<div class="t" style="left:790.25px;top:459.57px;font-size:8.99px;color:#2a2a2a;transform:scaleX(0.9000);-webkit-text-stroke:0.45px #2a2a2a;">0</div>
<div class="t" style="left:815.30px;top:459.57px;font-size:8.99px;color:#111;transform:scaleX(0.9000);-webkit-text-stroke:0.22px #111;">42</div>
<div class="t" style="left:845.10px;top:459.57px;font-size:8.99px;color:#2a2a2a;transform:scaleX(0.9000);-webkit-text-stroke:0.45px #2a2a2a;">0</div>
<div class="t" style="left:233.40px;top:473.25px;font-size:8.99px;color:#111;transform:scaleX(0.9000);-webkit-text-stroke:0.22px #111;">55</div>
<div class="t" style="left:269.65px;top:473.25px;font-size:8.99px;color:#2a2a2a;transform:scaleX(0.9000);-webkit-text-stroke:0.45px #2a2a2a;">0</div>
<div class="t" style="left:301.05px;top:473.25px;font-size:8.99px;color:#111;transform:scaleX(0.9000);-webkit-text-stroke:0.22px #111;">57</div>
<div class="t" style="left:330.35px;top:473.25px;font-size:8.99px;color:#2a2a2a;transform:scaleX(0.9000);-webkit-text-stroke:0.45px #2a2a2a;">0</div>
<div class="t" style="left:355.20px;top:473.25px;font-size:8.99px;color:#111;transform:scaleX(0.9000);-webkit-text-stroke:0.22px #111;">54</div>
<div class="t" style="left:389.15px;top:473.25px;font-size:8.99px;color:#2a2a2a;transform:scaleX(0.9000);-webkit-text-stroke:0.45px #2a2a2a;">0</div>
<div class="t" style="left:419.00px;top:473.25px;font-size:8.99px;color:#111;transform:scaleX(0.9000);-webkit-text-stroke:0.22px #111;">56</div>
<div class="t" style="left:448.65px;top:473.25px;font-size:8.99px;color:#2a2a2a;transform:scaleX(0.9000);-webkit-text-stroke:0.45px #2a2a2a;">0</div>
<div class="t" style="left:473.65px;top:473.25px;font-size:8.99px;color:#111;transform:scaleX(0.9000);-webkit-text-stroke:0.22px #111;">59</div>
<div class="t" style="left:502.90px;top:473.25px;font-size:8.99px;color:#2a2a2a;transform:scaleX(0.9000);-webkit-text-stroke:0.45px #2a2a2a;">0</div>
<div class="t" style="left:527.60px;top:473.25px;font-size:8.99px;color:#111;transform:scaleX(0.9000);-webkit-text-stroke:0.22px #111;">58</div>
<div class="t" style="left:557.20px;top:473.25px;font-size:8.99px;color:#2a2a2a;transform:scaleX(0.9000);-webkit-text-stroke:0.45px #2a2a2a;">0</div>
<div class="t" style="left:582.50px;top:473.25px;font-size:8.99px;color:#111;transform:scaleX(0.9000);-webkit-text-stroke:0.22px #111;">63</div>
<div class="t" style="left:611.90px;top:473.25px;font-size:8.99px;color:#2a2a2a;transform:scaleX(0.9000);-webkit-text-stroke:0.45px #2a2a2a;">0</div>
<div class="t" style="left:636.95px;top:473.25px;font-size:8.99px;color:#111;transform:scaleX(0.9000);-webkit-text-stroke:0.22px #111;">60</div>
<div class="t" style="left:669.30px;top:473.25px;font-size:8.99px;color:#2a2a2a;transform:scaleX(0.9000);-webkit-text-stroke:0.45px #2a2a2a;">0</div>
<div class="t" style="left:696.75px;top:473.25px;font-size:8.99px;color:#111;transform:scaleX(0.9000);-webkit-text-stroke:0.22px #111;">61</div>
<div class="t" style="left:730.80px;top:473.25px;font-size:8.99px;color:#2a2a2a;transform:scaleX(0.9000);-webkit-text-stroke:0.45px #2a2a2a;">0</div>
<div class="t" style="left:760.60px;top:473.25px;font-size:8.99px;color:#111;transform:scaleX(0.9000);-webkit-text-stroke:0.22px #111;">64</div>
<div class="t" style="left:790.25px;top:473.25px;font-size:8.99px;color:#2a2a2a;transform:scaleX(0.9000);-webkit-text-stroke:0.45px #2a2a2a;">0</div>
<div class="t" style="left:815.30px;top:473.25px;font-size:8.99px;color:#111;transform:scaleX(0.9000);-webkit-text-stroke:0.22px #111;">62</div>
<div class="t" style="left:845.10px;top:473.25px;font-size:8.99px;color:#2a2a2a;transform:scaleX(0.9000);-webkit-text-stroke:0.45px #2a2a2a;">0</div>
<div class="t" style="left:233.40px;top:486.93px;font-size:8.99px;color:#111;transform:scaleX(0.9000);-webkit-text-stroke:0.22px #111;">70</div>
<div class="t" style="left:269.65px;top:486.93px;font-size:8.99px;color:#2a2a2a;transform:scaleX(0.9000);-webkit-text-stroke:0.45px #2a2a2a;">0</div>
<div class="t" style="left:301.05px;top:486.93px;font-size:8.99px;color:#111;transform:scaleX(0.9000);-webkit-text-stroke:0.22px #111;">71</div>
<div class="t" style="left:330.35px;top:486.93px;font-size:8.99px;color:#2a2a2a;transform:scaleX(0.9000);-webkit-text-stroke:0.45px #2a2a2a;">0</div>
<div class="t" style="left:355.20px;top:486.93px;font-size:8.99px;color:#111;transform:scaleX(0.9000);-webkit-text-stroke:0.22px #111;">73</div>
<div class="t" style="left:389.15px;top:486.93px;font-size:8.99px;color:#2a2a2a;transform:scaleX(0.9000);-webkit-text-stroke:0.45px #2a2a2a;">0</div>
<div class="t" style="left:419.00px;top:486.93px;font-size:8.99px;color:#111;transform:scaleX(0.9000);-webkit-text-stroke:0.22px #111;">72</div>
<div class="t" style="left:448.65px;top:486.93px;font-size:8.99px;color:#2a2a2a;transform:scaleX(0.9000);-webkit-text-stroke:0.45px #2a2a2a;">0</div>
<div class="t" style="left:473.65px;top:486.93px;font-size:8.99px;color:#111;transform:scaleX(0.9000);-webkit-text-stroke:0.22px #111;">76</div>
<div class="t" style="left:502.90px;top:486.93px;font-size:8.99px;color:#2a2a2a;transform:scaleX(0.9000);-webkit-text-stroke:0.45px #2a2a2a;">0</div>
<div class="t" style="left:527.60px;top:486.93px;font-size:8.99px;color:#111;transform:scaleX(0.9000);-webkit-text-stroke:0.22px #111;">77</div>
<div class="t" style="left:557.20px;top:486.93px;font-size:8.99px;color:#2a2a2a;transform:scaleX(0.9000);-webkit-text-stroke:0.45px #2a2a2a;">0</div>
<div class="t" style="left:582.50px;top:486.93px;font-size:8.99px;color:#111;transform:scaleX(0.9000);-webkit-text-stroke:0.22px #111;">82</div>
<div class="t" style="left:611.90px;top:486.93px;font-size:8.99px;color:#2a2a2a;transform:scaleX(0.9000);-webkit-text-stroke:0.45px #2a2a2a;">0</div>
<div class="t" style="left:636.95px;top:486.93px;font-size:8.99px;color:#111;transform:scaleX(0.9000);-webkit-text-stroke:0.22px #111;">78</div>
<div class="t" style="left:669.30px;top:486.93px;font-size:8.99px;color:#2a2a2a;transform:scaleX(0.9000);-webkit-text-stroke:0.45px #2a2a2a;">0</div>
<div class="t" style="left:696.75px;top:486.93px;font-size:8.99px;color:#111;transform:scaleX(0.9000);-webkit-text-stroke:0.22px #111;">79</div>
<div class="t" style="left:730.80px;top:486.93px;font-size:8.99px;color:#2a2a2a;transform:scaleX(0.9000);-webkit-text-stroke:0.45px #2a2a2a;">0</div>
<div class="t" style="left:760.60px;top:486.93px;font-size:8.99px;color:#111;transform:scaleX(0.9000);-webkit-text-stroke:0.22px #111;">81</div>
<div class="t" style="left:790.25px;top:486.93px;font-size:8.99px;color:#2a2a2a;transform:scaleX(0.9000);-webkit-text-stroke:0.45px #2a2a2a;">0</div>
<div class="t" style="left:815.30px;top:486.93px;font-size:8.99px;color:#111;transform:scaleX(0.9000);-webkit-text-stroke:0.22px #111;">80</div>
<div class="t" style="left:845.10px;top:486.93px;font-size:8.99px;color:#2a2a2a;transform:scaleX(0.9000);-webkit-text-stroke:0.45px #2a2a2a;">0</div>
<div class="t" style="left:231.45px;top:500.61px;font-size:8.99px;color:#111;transform:scaleX(0.9000);-webkit-text-stroke:0.22px #111;">110</div>
<div class="t" style="left:269.65px;top:500.61px;font-size:8.99px;color:#2a2a2a;transform:scaleX(0.9000);-webkit-text-stroke:0.45px #2a2a2a;">0</div>
<div class="t" style="left:299.10px;top:500.61px;font-size:8.99px;color:#111;transform:scaleX(0.9000);-webkit-text-stroke:0.22px #111;">112</div>
<div class="t" style="left:330.35px;top:500.61px;font-size:8.99px;color:#2a2a2a;transform:scaleX(0.9000);-webkit-text-stroke:0.45px #2a2a2a;">0</div>
<div class="t" style="left:353.55px;top:500.61px;font-size:8.99px;color:#111;transform:scaleX(0.9000);-webkit-text-stroke:0.22px #111;">111</div>
<div class="t" style="left:389.15px;top:500.61px;font-size:8.99px;color:#2a2a2a;transform:scaleX(0.9000);-webkit-text-stroke:0.45px #2a2a2a;">0</div>
<div class="t" style="left:416.75px;top:500.61px;font-size:8.99px;color:#111;transform:scaleX(0.9000);-webkit-text-stroke:0.22px #111;">109</div>
<div class="t" style="left:448.65px;top:500.61px;font-size:8.99px;color:#2a2a2a;transform:scaleX(0.9000);-webkit-text-stroke:0.45px #2a2a2a;">0</div>
<div class="t" style="left:473.65px;top:500.61px;font-size:8.99px;color:#111;transform:scaleX(0.9000);-webkit-text-stroke:0.22px #111;">90</div>
<div class="t" style="left:502.90px;top:500.61px;font-size:8.99px;color:#2a2a2a;transform:scaleX(0.9000);-webkit-text-stroke:0.45px #2a2a2a;">0</div>
<div class="t" style="left:527.60px;top:500.61px;font-size:8.99px;color:#111;transform:scaleX(0.9000);-webkit-text-stroke:0.22px #111;">89</div>
<div class="t" style="left:557.20px;top:500.61px;font-size:8.99px;color:#2a2a2a;transform:scaleX(0.9000);-webkit-text-stroke:0.45px #2a2a2a;">0</div>
<div class="t" style="left:580.25px;top:500.61px;font-size:8.99px;color:#111;transform:scaleX(0.9000);-webkit-text-stroke:0.22px #111;">105</div>
<div class="t" style="left:611.90px;top:500.61px;font-size:8.99px;color:#2a2a2a;transform:scaleX(0.9000);-webkit-text-stroke:0.45px #2a2a2a;">0</div>
<div class="t" style="left:634.70px;top:500.61px;font-size:8.99px;color:#111;transform:scaleX(0.9000);-webkit-text-stroke:0.22px #111;">107</div>
<div class="t" style="left:669.30px;top:500.61px;font-size:8.99px;color:#2a2a2a;transform:scaleX(0.9000);-webkit-text-stroke:0.45px #2a2a2a;">0</div>
<div class="t" style="left:694.50px;top:500.61px;font-size:8.99px;color:#111;transform:scaleX(0.9000);-webkit-text-stroke:0.22px #111;">106</div>
<div class="t" style="left:730.80px;top:500.61px;font-size:8.99px;color:#2a2a2a;transform:scaleX(0.9000);-webkit-text-stroke:0.45px #2a2a2a;">0</div>
<div class="t" style="left:758.35px;top:500.61px;font-size:8.99px;color:#111;transform:scaleX(0.9000);-webkit-text-stroke:0.22px #111;">104</div>
<div class="t" style="left:790.25px;top:500.61px;font-size:8.99px;color:#2a2a2a;transform:scaleX(0.9000);-webkit-text-stroke:0.45px #2a2a2a;">0</div>
<div class="t" style="left:813.05px;top:500.61px;font-size:8.99px;color:#111;transform:scaleX(0.9000);-webkit-text-stroke:0.22px #111;">108</div>
<div class="t" style="left:845.10px;top:500.61px;font-size:8.99px;color:#2a2a2a;transform:scaleX(0.9000);-webkit-text-stroke:0.45px #2a2a2a;">0</div>
<div class="t" style="left:231.15px;top:514.29px;font-size:8.99px;color:#111;transform:scaleX(0.9000);-webkit-text-stroke:0.22px #111;">125</div>
<div class="t" style="left:269.65px;top:514.29px;font-size:8.99px;color:#2a2a2a;transform:scaleX(0.9000);-webkit-text-stroke:0.45px #2a2a2a;">0</div>
<div class="t" style="left:298.80px;top:514.29px;font-size:8.99px;color:#111;transform:scaleX(0.9000);-webkit-text-stroke:0.22px #111;">124</div>
<div class="t" style="left:330.35px;top:514.29px;font-size:8.99px;color:#2a2a2a;transform:scaleX(0.9000);-webkit-text-stroke:0.45px #2a2a2a;">0</div>
<div class="t" style="left:352.95px;top:514.29px;font-size:8.99px;color:#111;transform:scaleX(0.9000);-webkit-text-stroke:0.22px #111;">122</div>
<div class="t" style="left:389.15px;top:514.29px;font-size:8.99px;color:#2a2a2a;transform:scaleX(0.9000);-webkit-text-stroke:0.45px #2a2a2a;">0</div>
<div class="t" style="left:416.75px;top:514.29px;font-size:8.99px;color:#111;transform:scaleX(0.9000);-webkit-text-stroke:0.22px #111;">123</div>
<div class="t" style="left:448.65px;top:514.29px;font-size:8.99px;color:#2a2a2a;transform:scaleX(0.9000);-webkit-text-stroke:0.45px #2a2a2a;">0</div>
<div class="t" style="left:471.40px;top:514.29px;font-size:8.99px;color:#111;transform:scaleX(0.9000);-webkit-text-stroke:0.22px #111;">102</div>
<div class="t" style="left:502.90px;top:514.29px;font-size:8.99px;color:#2a2a2a;transform:scaleX(0.9000);-webkit-text-stroke:0.45px #2a2a2a;">0</div>
<div class="t" style="left:525.35px;top:514.29px;font-size:8.99px;color:#111;transform:scaleX(0.9000);-webkit-text-stroke:0.22px #111;">103</div>
<div class="t" style="left:557.20px;top:514.29px;font-size:8.99px;color:#2a2a2a;transform:scaleX(0.9000);-webkit-text-stroke:0.45px #2a2a2a;">0</div>
<div class="t" style="left:580.25px;top:514.29px;font-size:8.99px;color:#111;transform:scaleX(0.9000);-webkit-text-stroke:0.22px #111;">131</div>
<div class="t" style="left:611.90px;top:514.29px;font-size:8.99px;color:#2a2a2a;transform:scaleX(0.9000);-webkit-text-stroke:0.45px #2a2a2a;">0</div>
<div class="t" style="left:634.70px;top:514.29px;font-size:8.99px;color:#111;transform:scaleX(0.9000);-webkit-text-stroke:0.22px #111;">130</div>
<div class="t" style="left:669.30px;top:514.29px;font-size:8.99px;color:#2a2a2a;transform:scaleX(0.9000);-webkit-text-stroke:0.45px #2a2a2a;">0</div>
<div class="t" style="left:694.50px;top:514.29px;font-size:8.99px;color:#111;transform:scaleX(0.9000);-webkit-text-stroke:0.22px #111;">133</div>
<div class="t" style="left:730.80px;top:514.29px;font-size:8.99px;color:#2a2a2a;transform:scaleX(0.9000);-webkit-text-stroke:0.45px #2a2a2a;">0</div>
<div class="t" style="left:758.35px;top:514.29px;font-size:8.99px;color:#111;transform:scaleX(0.9000);-webkit-text-stroke:0.22px #111;">134</div>
<div class="t" style="left:790.25px;top:514.29px;font-size:8.99px;color:#2a2a2a;transform:scaleX(0.9000);-webkit-text-stroke:0.45px #2a2a2a;">0</div>
<div class="t" style="left:813.05px;top:514.29px;font-size:8.99px;color:#111;transform:scaleX(0.9000);-webkit-text-stroke:0.22px #111;">132</div>
<div class="t" style="left:845.10px;top:514.29px;font-size:8.99px;color:#2a2a2a;transform:scaleX(0.9000);-webkit-text-stroke:0.45px #2a2a2a;">0</div>
<div class="t" style="left:231.15px;top:527.97px;font-size:8.99px;color:#111;transform:scaleX(0.9000);-webkit-text-stroke:0.22px #111;">137</div>
<div class="t" style="left:269.65px;top:527.97px;font-size:8.99px;color:#2a2a2a;transform:scaleX(0.9000);-webkit-text-stroke:0.45px #2a2a2a;">0</div>
<div class="t" style="left:298.80px;top:527.97px;font-size:8.99px;color:#111;transform:scaleX(0.9000);-webkit-text-stroke:0.22px #111;">135</div>
<div class="t" style="left:330.35px;top:527.97px;font-size:8.99px;color:#2a2a2a;transform:scaleX(0.9000);-webkit-text-stroke:0.45px #2a2a2a;">0</div>
<div class="t" style="left:352.95px;top:527.97px;font-size:8.99px;color:#111;transform:scaleX(0.9000);-webkit-text-stroke:0.22px #111;">138</div>
<div class="t" style="left:389.15px;top:527.97px;font-size:8.99px;color:#2a2a2a;transform:scaleX(0.9000);-webkit-text-stroke:0.45px #2a2a2a;">0</div>
<div class="t" style="left:416.75px;top:527.97px;font-size:8.99px;color:#111;transform:scaleX(0.9000);-webkit-text-stroke:0.22px #111;">136</div>
<div class="t" style="left:448.65px;top:527.97px;font-size:8.99px;color:#2a2a2a;transform:scaleX(0.9000);-webkit-text-stroke:0.45px #2a2a2a;">0</div>
<div class="t" style="left:471.40px;top:527.97px;font-size:8.99px;color:#111;transform:scaleX(0.9000);-webkit-text-stroke:0.22px #111;">128</div>
<div class="t" style="left:502.90px;top:527.97px;font-size:8.99px;color:#2a2a2a;transform:scaleX(0.9000);-webkit-text-stroke:0.45px #2a2a2a;">0</div>
<div class="t" style="left:525.35px;top:527.97px;font-size:8.99px;color:#111;transform:scaleX(0.9000);-webkit-text-stroke:0.22px #111;">129</div>
<div class="t" style="left:557.20px;top:527.97px;font-size:8.99px;color:#2a2a2a;transform:scaleX(0.9000);-webkit-text-stroke:0.45px #2a2a2a;">0</div>
<div class="t" style="left:580.25px;top:527.97px;font-size:8.99px;color:#111;transform:scaleX(0.9000);-webkit-text-stroke:0.22px #111;">166</div>
<div class="t" style="left:611.90px;top:527.97px;font-size:8.99px;color:#2a2a2a;transform:scaleX(0.9000);-webkit-text-stroke:0.45px #2a2a2a;">0</div>
<div class="t" style="left:634.70px;top:527.97px;font-size:8.99px;color:#111;transform:scaleX(0.9000);-webkit-text-stroke:0.22px #111;">162</div>
<div class="t" style="left:669.30px;top:527.97px;font-size:8.99px;color:#2a2a2a;transform:scaleX(0.9000);-webkit-text-stroke:0.45px #2a2a2a;">0</div>
<div class="t" style="left:694.50px;top:527.97px;font-size:8.99px;color:#111;transform:scaleX(0.9000);-webkit-text-stroke:0.22px #111;">163</div>
<div class="t" style="left:730.80px;top:527.97px;font-size:8.99px;color:#2a2a2a;transform:scaleX(0.9000);-webkit-text-stroke:0.45px #2a2a2a;">0</div>
<div class="t" style="left:758.35px;top:527.97px;font-size:8.99px;color:#111;transform:scaleX(0.9000);-webkit-text-stroke:0.22px #111;">164</div>
<div class="t" style="left:790.25px;top:527.97px;font-size:8.99px;color:#2a2a2a;transform:scaleX(0.9000);-webkit-text-stroke:0.45px #2a2a2a;">0</div>
<div class="t" style="left:813.05px;top:527.97px;font-size:8.99px;color:#111;transform:scaleX(0.9000);-webkit-text-stroke:0.22px #111;">165</div>
<div class="t" style="left:845.10px;top:527.97px;font-size:8.99px;color:#2a2a2a;transform:scaleX(0.9000);-webkit-text-stroke:0.45px #2a2a2a;">0</div>
<div class="t" style="left:231.15px;top:541.65px;font-size:8.99px;color:#111;transform:scaleX(0.9000);-webkit-text-stroke:0.22px #111;">161</div>
<div class="t" style="left:269.65px;top:541.65px;font-size:8.99px;color:#2a2a2a;transform:scaleX(0.9000);-webkit-text-stroke:0.45px #2a2a2a;">0</div>
<div class="t" style="left:298.80px;top:541.65px;font-size:8.99px;color:#111;transform:scaleX(0.9000);-webkit-text-stroke:0.22px #111;">159</div>
<div class="t" style="left:330.35px;top:541.65px;font-size:8.99px;color:#2a2a2a;transform:scaleX(0.9000);-webkit-text-stroke:0.45px #2a2a2a;">0</div>
<div class="t" style="left:352.95px;top:541.65px;font-size:8.99px;color:#111;transform:scaleX(0.9000);-webkit-text-stroke:0.22px #111;">160</div>
<div class="t" style="left:389.15px;top:541.65px;font-size:8.99px;color:#2a2a2a;transform:scaleX(0.9000);-webkit-text-stroke:0.45px #2a2a2a;">0</div>
<div class="t" style="left:416.75px;top:541.65px;font-size:8.99px;color:#111;transform:scaleX(0.9000);-webkit-text-stroke:0.22px #111;">158</div>
<div class="t" style="left:448.65px;top:541.65px;font-size:8.99px;color:#2a2a2a;transform:scaleX(0.9000);-webkit-text-stroke:0.45px #2a2a2a;">0</div>
<div class="t" style="left:471.40px;top:541.65px;font-size:8.99px;color:#111;transform:scaleX(0.9000);-webkit-text-stroke:0.22px #111;">172</div>
<div class="t" style="left:502.90px;top:541.65px;font-size:8.99px;color:#2a2a2a;transform:scaleX(0.9000);-webkit-text-stroke:0.45px #2a2a2a;">0</div>
<div class="t" style="left:525.35px;top:541.65px;font-size:8.99px;color:#111;transform:scaleX(0.9000);-webkit-text-stroke:0.22px #111;">173</div>
<div class="t" style="left:557.20px;top:541.65px;font-size:8.99px;color:#2a2a2a;transform:scaleX(0.9000);-webkit-text-stroke:0.45px #2a2a2a;">0</div>
<div class="t" style="left:580.25px;top:541.65px;font-size:8.99px;color:#111;transform:scaleX(0.9000);-webkit-text-stroke:0.22px #111;">187</div>
<div class="t" style="left:611.90px;top:541.65px;font-size:8.99px;color:#2a2a2a;transform:scaleX(0.9000);-webkit-text-stroke:0.45px #2a2a2a;">0</div>
<div class="t" style="left:634.70px;top:541.65px;font-size:8.99px;color:#111;transform:scaleX(0.9000);-webkit-text-stroke:0.22px #111;">191</div>
<div class="t" style="left:669.30px;top:541.65px;font-size:8.99px;color:#2a2a2a;transform:scaleX(0.9000);-webkit-text-stroke:0.45px #2a2a2a;">0</div>
<div class="t" style="left:694.50px;top:541.65px;font-size:8.99px;color:#111;transform:scaleX(0.9000);-webkit-text-stroke:0.22px #111;">189</div>
<div class="t" style="left:730.80px;top:541.65px;font-size:8.99px;color:#2a2a2a;transform:scaleX(0.9000);-webkit-text-stroke:0.45px #2a2a2a;">0</div>
<div class="t" style="left:758.35px;top:541.65px;font-size:8.99px;color:#111;transform:scaleX(0.9000);-webkit-text-stroke:0.22px #111;">188</div>
<div class="t" style="left:790.25px;top:541.65px;font-size:8.99px;color:#2a2a2a;transform:scaleX(0.9000);-webkit-text-stroke:0.45px #2a2a2a;">0</div>
<div class="t" style="left:813.05px;top:541.65px;font-size:8.99px;color:#111;transform:scaleX(0.9000);-webkit-text-stroke:0.22px #111;">190</div>
<div class="t" style="left:845.10px;top:541.65px;font-size:8.99px;color:#2a2a2a;transform:scaleX(0.9000);-webkit-text-stroke:0.45px #2a2a2a;">0</div>
<div class="t" style="left:231.15px;top:555.33px;font-size:8.99px;color:#111;transform:scaleX(0.9000);-webkit-text-stroke:0.22px #111;">182</div>
<div class="t" style="left:269.65px;top:555.33px;font-size:8.99px;color:#2a2a2a;transform:scaleX(0.9000);-webkit-text-stroke:0.45px #2a2a2a;">4</div>
<div class="t" style="left:298.80px;top:555.33px;font-size:8.99px;color:#111;transform:scaleX(0.9000);-webkit-text-stroke:0.22px #111;">179</div>
<div class="t" style="left:330.35px;top:555.33px;font-size:8.99px;color:#2a2a2a;transform:scaleX(0.9000);-webkit-text-stroke:0.45px #2a2a2a;">0</div>
<div class="t" style="left:352.95px;top:555.33px;font-size:8.99px;color:#111;transform:scaleX(0.9000);-webkit-text-stroke:0.22px #111;">180</div>
<div class="t" style="left:389.15px;top:555.33px;font-size:8.99px;color:#2a2a2a;transform:scaleX(0.9000);-webkit-text-stroke:0.45px #2a2a2a;">0</div>
<div class="t" style="left:416.75px;top:555.33px;font-size:8.99px;color:#111;transform:scaleX(0.9000);-webkit-text-stroke:0.22px #111;">181</div>
<div class="t" style="left:448.65px;top:555.33px;font-size:8.99px;color:#2a2a2a;transform:scaleX(0.9000);-webkit-text-stroke:0.45px #2a2a2a;">4</div>
<div class="t" style="left:471.40px;top:555.33px;font-size:8.99px;color:#111;transform:scaleX(0.9000);-webkit-text-stroke:0.22px #111;">185</div>
<div class="t" style="left:502.90px;top:555.33px;font-size:8.99px;color:#2a2a2a;transform:scaleX(0.9000);-webkit-text-stroke:0.45px #2a2a2a;">0</div>
<div class="t" style="left:525.35px;top:555.33px;font-size:8.99px;color:#111;transform:scaleX(0.9000);-webkit-text-stroke:0.22px #111;">186</div>
<div class="t" style="left:557.20px;top:555.33px;font-size:8.99px;color:#2a2a2a;transform:scaleX(0.9000);-webkit-text-stroke:0.45px #2a2a2a;">0</div>
<div class="t" style="left:580.25px;top:555.33px;font-size:8.99px;color:#111;transform:scaleX(0.9000);-webkit-text-stroke:0.22px #111;">195</div>
<div class="t" style="left:611.90px;top:555.33px;font-size:8.99px;color:#2a2a2a;transform:scaleX(0.9000);-webkit-text-stroke:0.45px #2a2a2a;">0</div>
<div class="t" style="left:634.70px;top:555.33px;font-size:8.99px;color:#111;transform:scaleX(0.9000);-webkit-text-stroke:0.22px #111;">196</div>
<div class="t" style="left:669.30px;top:555.33px;font-size:8.99px;color:#2a2a2a;transform:scaleX(0.9000);-webkit-text-stroke:0.45px #2a2a2a;">0</div>
<div class="t" style="left:694.50px;top:555.33px;font-size:8.99px;color:#111;transform:scaleX(0.9000);-webkit-text-stroke:0.22px #111;">192</div>
<div class="t" style="left:730.80px;top:555.33px;font-size:8.99px;color:#2a2a2a;transform:scaleX(0.9000);-webkit-text-stroke:0.45px #2a2a2a;">0</div>
<div class="t" style="left:758.35px;top:555.33px;font-size:8.99px;color:#111;transform:scaleX(0.9000);-webkit-text-stroke:0.22px #111;">193</div>
<div class="t" style="left:790.25px;top:555.33px;font-size:8.99px;color:#2a2a2a;transform:scaleX(0.9000);-webkit-text-stroke:0.45px #2a2a2a;">0</div>
<div class="t" style="left:813.05px;top:555.33px;font-size:8.99px;color:#111;transform:scaleX(0.9000);-webkit-text-stroke:0.22px #111;">194</div>
<div class="t" style="left:845.10px;top:555.33px;font-size:8.99px;color:#2a2a2a;transform:scaleX(0.9000);-webkit-text-stroke:0.45px #2a2a2a;">0</div>
<div class="t" style="left:269.72px;top:377.74px;font-size:8.70px;color:#2a2a2a;transform:scaleX(0.9000);-webkit-text-stroke:0.45px #2a2a2a;">3</div>
<div class="t" style="left:330.42px;top:377.74px;font-size:8.70px;color:#2a2a2a;transform:scaleX(0.9000);-webkit-text-stroke:0.45px #2a2a2a;">0</div>
<div class="t" style="left:389.22px;top:377.74px;font-size:8.70px;color:#2a2a2a;transform:scaleX(0.9000);-webkit-text-stroke:0.45px #2a2a2a;">0</div>
<div class="t" style="left:448.72px;top:377.74px;font-size:8.70px;color:#2a2a2a;transform:scaleX(0.9000);-webkit-text-stroke:0.45px #2a2a2a;">0</div>
<div class="t" style="left:502.97px;top:377.74px;font-size:8.70px;color:#2a2a2a;transform:scaleX(0.9000);-webkit-text-stroke:0.45px #2a2a2a;">0</div>
<div class="t" style="left:557.27px;top:377.74px;font-size:8.70px;color:#2a2a2a;transform:scaleX(0.9000);-webkit-text-stroke:0.45px #2a2a2a;">0</div>
<div class="t" style="left:611.97px;top:377.74px;font-size:8.70px;color:#2a2a2a;transform:scaleX(0.9000);-webkit-text-stroke:0.45px #2a2a2a;">0</div>
<div class="t" style="left:669.37px;top:377.74px;font-size:8.70px;color:#2a2a2a;transform:scaleX(0.9000);-webkit-text-stroke:0.45px #2a2a2a;">0</div>
<div class="t" style="left:730.87px;top:377.74px;font-size:8.70px;color:#2a2a2a;transform:scaleX(0.9000);-webkit-text-stroke:0.45px #2a2a2a;">0</div>
<div class="t" style="left:790.32px;top:377.74px;font-size:8.70px;color:#2a2a2a;transform:scaleX(0.9000);-webkit-text-stroke:0.45px #2a2a2a;">0</div>
<div class="t" style="left:845.17px;top:377.74px;font-size:8.70px;color:#2a2a2a;transform:scaleX(0.9000);-webkit-text-stroke:0.45px #2a2a2a;">0</div>
<div class="t" style="left:269.72px;top:569.26px;font-size:8.70px;color:#2a2a2a;transform:scaleX(0.9000);-webkit-text-stroke:0.45px #2a2a2a;">4</div>
<div class="t" style="left:330.42px;top:569.26px;font-size:8.70px;color:#2a2a2a;transform:scaleX(0.9000);-webkit-text-stroke:0.45px #2a2a2a;">0</div>
<div class="t" style="left:389.22px;top:569.26px;font-size:8.70px;color:#2a2a2a;transform:scaleX(0.9000);-webkit-text-stroke:0.45px #2a2a2a;">0</div>
<div class="t" style="left:448.72px;top:569.26px;font-size:8.70px;color:#2a2a2a;transform:scaleX(0.9000);-webkit-text-stroke:0.45px #2a2a2a;">4</div>
<div class="t" style="left:502.97px;top:569.26px;font-size:8.70px;color:#2a2a2a;transform:scaleX(0.9000);-webkit-text-stroke:0.45px #2a2a2a;">0</div>
<div class="t" style="left:557.27px;top:569.26px;font-size:8.70px;color:#2a2a2a;transform:scaleX(0.9000);-webkit-text-stroke:0.45px #2a2a2a;">0</div>
<div class="t" style="left:611.97px;top:569.26px;font-size:8.70px;color:#2a2a2a;transform:scaleX(0.9000);-webkit-text-stroke:0.45px #2a2a2a;">0</div>
<div class="t" style="left:669.37px;top:569.26px;font-size:8.70px;color:#2a2a2a;transform:scaleX(0.9000);-webkit-text-stroke:0.45px #2a2a2a;">0</div>
<div class="t" style="left:730.87px;top:569.26px;font-size:8.70px;color:#2a2a2a;transform:scaleX(0.9000);-webkit-text-stroke:0.45px #2a2a2a;">0</div>
<div class="t" style="left:790.32px;top:569.26px;font-size:8.70px;color:#2a2a2a;transform:scaleX(0.9000);-webkit-text-stroke:0.45px #2a2a2a;">0</div>
<div class="t" style="left:845.17px;top:569.26px;font-size:8.70px;color:#2a2a2a;transform:scaleX(0.9000);-webkit-text-stroke:0.45px #2a2a2a;">0</div>
<div class="t" style="left:285.60px;top:390.97px;font-size:8.99px;color:#2a2a2a;transform:scaleX(1.0766);-webkit-text-stroke:0.25px #2a2a2a;">Filtre sensoriel</div>
<div class="t" style="left:418.75px;top:390.97px;font-size:8.99px;color:#2a2a2a;transform:scaleX(1.0521);-webkit-text-stroke:0.25px #2a2a2a;">Filtre de comparaison</div>
<div class="t" style="left:530.85px;top:390.97px;font-size:8.99px;color:#2a2a2a;transform:scaleX(1.0571);-webkit-text-stroke:0.25px #2a2a2a;">Taille du découpage</div>
<div class="t" style="left:641.10px;top:390.97px;font-size:8.99px;color:#2a2a2a;transform:scaleX(1.0452);-webkit-text-stroke:0.25px #2a2a2a;">Processus d'interaction</div>
<div class="t" style="left:768.80px;top:390.97px;font-size:8.99px;color:#2a2a2a;transform:scaleX(1.0409);-webkit-text-stroke:0.25px #2a2a2a;">Position d'analyse</div>
<div class="t" style="left:299.20px;top:418.21px;font-size:9.13px;color:#222;font-weight:bold;transform:scaleX(0.9856);">Orientation du temps</div>
<div class="t" style="left:478.95px;top:418.21px;font-size:9.13px;color:#222;font-weight:bold;transform:scaleX(0.9914);">Index de référence</div>
<div class="t" style="left:642.80px;top:418.21px;font-size:9.13px;color:#222;font-weight:bold;transform:scaleX(0.9878);">Application de l'index de référence</div>
<div class="t" style="left:299.05px;top:582.49px;font-size:8.99px;color:#2a2a2a;transform:scaleX(1.0886);-webkit-text-stroke:0.25px #2a2a2a;">Orientation du temps</div>
<div class="t" style="left:478.95px;top:582.49px;font-size:8.99px;color:#2a2a2a;transform:scaleX(1.0677);-webkit-text-stroke:0.25px #2a2a2a;">Index de référence</div>
<div class="t" style="left:643.05px;top:582.49px;font-size:8.99px;color:#2a2a2a;transform:scaleX(1.0832);-webkit-text-stroke:0.25px #2a2a2a;">Application de l'index de référence</div>
<div class="t" style="left:237.35px;top:432.14px;font-size:8.84px;color:#2a2a2a;font-style:italic;transform:scaleX(1.0658);-webkit-text-stroke:0.25px #2a2a2a;">Simultané</div>
<div class="t" style="left:304.00px;top:432.14px;font-size:8.84px;color:#2a2a2a;font-style:italic;transform:scaleX(1.0076);-webkit-text-stroke:0.25px #2a2a2a;">Présent</div>
<div class="t" style="left:365.81px;top:432.14px;font-size:8.84px;color:#2a2a2a;font-style:italic;-webkit-text-stroke:0.25px #2a2a2a;">Passé</div>
<div class="t" style="left:426.88px;top:432.14px;font-size:8.84px;color:#2a2a2a;font-style:italic;-webkit-text-stroke:0.25px #2a2a2a;">Futur</div>
<div class="t" style="left:485.21px;top:432.14px;font-size:8.84px;color:#2a2a2a;font-style:italic;-webkit-text-stroke:0.25px #2a2a2a;">Soi</div>
<div class="t" style="left:534.45px;top:432.14px;font-size:8.84px;color:#2a2a2a;font-style:italic;transform:scaleX(1.0884);-webkit-text-stroke:0.25px #2a2a2a;">Autre</div>
<div class="t" style="left:581.50px;top:432.69px;font-size:7.25px;color:#2a2a2a;font-style:italic;-webkit-text-stroke:0.3px #2a2a2a;">De soi à soi</div>
<div class="t" style="left:634.90px;top:432.69px;font-size:7.25px;color:#2a2a2a;font-style:italic;transform:scaleX(0.9479);-webkit-text-stroke:0.3px #2a2a2a;">De soi à l'autre</div>
<div class="t" style="left:688.45px;top:432.69px;font-size:7.25px;color:#2a2a2a;font-style:italic;transform:scaleX(1.0676);-webkit-text-stroke:0.3px #2a2a2a;">De l'autre à l'autre</div>
<div class="t" style="left:755.75px;top:432.69px;font-size:7.25px;color:#2a2a2a;font-style:italic;transform:scaleX(0.9583);-webkit-text-stroke:0.3px #2a2a2a;">De l'autre à soi</div>
<div class="t" style="left:810.70px;top:434.09px;font-size:7.25px;color:#2a2a2a;-webkit-text-stroke:0.3px #2a2a2a;">Soi / autre /soi</div>
<div class="a" style="left:914.40px;top:510.10px;width:57.00px;height:15.28px;border:1.6px solid #217346;box-sizing:border-box;"></div>
<div class="a" style="left:969.00px;top:523.08px;width:3.50px;height:3.50px;background:#217346;"></div>
</div></div>
<div class="a" style="left:1126.30px;top:288.00px;width:14.70px;height:311.80px;background:#fff;"></div>
<div class="a" style="left:1128.50px;top:293.50px;width:10.50px;height:11.00px;background:#fff;border:1px solid #c8c8c8;box-sizing:border-box;"></div>
<svg style="left:1131.5px;top:297.5px" width="5" height="3" viewBox="0 0 5 3"><path d="M0 3H5L2.5 0Z" fill="#555"/></svg>
<div class="a" style="left:1129.00px;top:305.00px;width:9.50px;height:284.50px;background:#f0f0f0;"></div>
<div class="a" style="left:1129.00px;top:367.50px;width:9.50px;height:221.50px;background:#fff;border:1px solid #c8c8c8;box-sizing:border-box;"></div>
<div class="a" style="left:1128.50px;top:589.50px;width:10.50px;height:10.00px;background:#fff;border:1px solid #c8c8c8;box-sizing:border-box;"></div>
<svg style="left:1131.5px;top:593px" width="5" height="3" viewBox="0 0 5 3"><path d="M0 0H5L2.5 3Z" fill="#555"/></svg>
<div class="a" style="left:207.00px;top:599.80px;width:934.00px;height:18.50px;background:#f3f3f3;"></div>
<div class="a" style="left:207.00px;top:599.80px;width:934.00px;height:0.70px;background:#d4d4d4;"></div>
<svg style="left:225px;top:606px" width="4" height="6" viewBox="0 0 4 6"><path d="M4 0V6L0 3Z" fill="#444"/></svg>
<svg style="left:244.5px;top:606px" width="4" height="6" viewBox="0 0 4 6"><path d="M0 0V6L4 3Z" fill="#bbb"/></svg>
<div class="a" style="left:262.00px;top:610.00px;width:1.30px;height:1.30px;background:#444;"></div>
<div class="a" style="left:265.00px;top:610.00px;width:1.30px;height:1.30px;background:#444;"></div>
<div class="a" style="left:268.00px;top:610.00px;width:1.30px;height:1.30px;background:#444;"></div>
<div class="a" style="left:275.20px;top:601.00px;width:1.00px;height:15.00px;background:#c6c6c6;"></div>
<div class="a" style="left:345.50px;top:601.00px;width:1.00px;height:15.00px;background:#c6c6c6;"></div>
<div class="a" style="left:422.10px;top:601.00px;width:1.00px;height:15.00px;background:#c6c6c6;"></div>
<div class="a" style="left:536.20px;top:601.00px;width:1.00px;height:15.00px;background:#c6c6c6;"></div>
<div class="a" style="left:614.80px;top:601.00px;width:1.00px;height:15.00px;background:#c6c6c6;"></div>
<div class="a" style="left:687.30px;top:601.00px;width:1.00px;height:15.00px;background:#c6c6c6;"></div>
<div class="a" style="left:422.60px;top:600.00px;width:73.20px;height:16.50px;background:#fff;"></div>
<div class="a" style="left:422.60px;top:614.50px;width:73.20px;height:1.50px;background:#217346;"></div>
<div class="t" style="left:286.00px;top:603.82px;font-size:8.84px;color:#555;transform:scaleX(0.9316);">Résultats (P)</div>
<div class="t" style="left:355.50px;top:603.82px;font-size:8.84px;color:#555;transform:scaleX(1.0347);">Métaprofil (A)</div>
<div class="t" style="left:430.20px;top:603.82px;font-size:8.84px;color:#217346;font-weight:bold;transform:scaleX(0.9757);">Résultats  (A)</div>
<div class="t" style="left:504.80px;top:603.82px;font-size:8.84px;color:#555;transform:scaleX(0.8804);">Feuil1</div>
<div class="t" style="left:546.90px;top:603.82px;font-size:8.84px;color:#555;transform:scaleX(1.0655);">Métaprofil (M)</div>
<div class="t" style="left:625.60px;top:603.82px;font-size:8.84px;color:#555;transform:scaleX(0.9893);">Résultats (M)</div>
<svg style="left:710px;top:603.5px" width="11" height="11" viewBox="0 0 11 11"><circle cx="5.5" cy="5.5" r="4.8" fill="none" stroke="#666" stroke-width="1"/><path d="M5.5 2.5V8.5M2.5 5.5H8.5" stroke="#666" stroke-width="1.1"/></svg>
<div class="a" style="left:766.70px;top:605.00px;width:1.10px;height:1.10px;background:#999;"></div>
<div class="a" style="left:766.70px;top:608.00px;width:1.10px;height:1.10px;background:#999;"></div>
<div class="a" style="left:766.70px;top:611.00px;width:1.10px;height:1.10px;background:#999;"></div>
<div class="a" style="left:778.80px;top:603.80px;width:325.20px;height:10.50px;background:#fff;border:1px solid #c8c8c8;box-sizing:border-box;"></div>
<div class="a" style="left:778.80px;top:603.80px;width:9.20px;height:10.50px;background:#fff;border:1px solid #c8c8c8;box-sizing:border-box;"></div>
<svg style="left:781.5px;top:606.5px" width="3" height="5" viewBox="0 0 3 5"><path d="M3 0V5L0 2.5Z" fill="#555"/></svg>
<div class="a" style="left:1116.90px;top:603.80px;width:9.40px;height:10.50px;background:#fff;border:1px solid #c8c8c8;box-sizing:border-box;"></div>
<svg style="left:1120.5px;top:606.5px" width="3" height="5" viewBox="0 0 3 5"><path d="M0 0V5L3 2.5Z" fill="#555"/></svg>
<div class="a" style="left:207.00px;top:618.30px;width:934.70px;height:16.30px;background:#217346;"></div>
<div class="t" style="left:211.70px;top:622.23px;font-size:8.12px;color:#e8f0ea;transform:scaleX(0.7530);">PRÊT</div>
<svg style="left:242px;top:621px" width="10" height="10" viewBox="0 0 10 10"><rect x="0" y="0" width="3.5" height="3" fill="#dfe"/><rect x="0.5" y="3.5" width="9" height="6" fill="none" stroke="#dfe" stroke-width="0.9"/><path d="M0.5 5.5H9.5M0.5 7.5H9.5M3.5 3.5V9.5M6.5 3.5V9.5" stroke="#dfe" stroke-width="0.6"/></svg>
<div class="a" style="left:940.00px;top:618.30px;width:24.20px;height:16.30px;background:#1a5c38;"></div>
<svg style="left:946.5px;top:621px" width="11" height="10" viewBox="0 0 11 10"><rect x="0.5" y="0.5" width="10" height="9" fill="none" stroke="#e8f0ea" stroke-width="0.9"/><path d="M0.5 3.5H10.5M0.5 6.5H10.5M3.8 0.5V9.5M7.2 0.5V9.5" stroke="#e8f0ea" stroke-width="0.8"/></svg>
<svg style="left:973px;top:621px" width="10" height="10" viewBox="0 0 10 10"><rect x="0.5" y="0.5" width="9" height="9" fill="none" stroke="#e8f0ea" stroke-width="0.9"/><rect x="2.5" y="2.5" width="5" height="5" fill="none" stroke="#e8f0ea" stroke-width="0.8"/></svg>
<svg style="left:999.3px;top:621px" width="10" height="10" viewBox="0 0 10 10"><rect x="0.5" y="0.5" width="9" height="9" fill="none" stroke="#e8f0ea" stroke-width="0.9"/><rect x="1" y="1" width="3.5" height="5" fill="#e8f0ea"/><rect x="5.5" y="1" width="3.5" height="5" fill="#e8f0ea"/></svg>
<div class="a" style="left:1020.20px;top:625.50px;width:3.80px;height:1.10px;background:#fff;"></div>
<div class="a" style="left:1027.90px;top:625.70px;width:68.10px;height:0.70px;background:#e8f0ea;"></div>
<div class="a" style="left:1059.50px;top:621.80px;width:2.80px;height:7.70px;background:#fff;"></div>
<div class="a" style="left:1098.20px;top:625.50px;width:6.10px;height:1.10px;background:#fff;"></div>
<div class="a" style="left:1100.70px;top:623.00px;width:1.10px;height:6.00px;background:#fff;"></div>
<div class="t" style="left:1114.70px;top:621.65px;font-size:9.28px;color:#f0f5f1;transform:scaleX(0.7757);">100 %</div>
<svg style="left:0;top:0" width="1366" height="768" viewBox="0 0 1366 768">
<ellipse cx="269" cy="567" rx="29" ry="23.5" fill="none" stroke="#c9202a" stroke-width="2.1" transform="rotate(-8 269 567)"/>
<ellipse cx="448" cy="572" rx="29" ry="23.5" fill="none" stroke="#c9202a" stroke-width="2.1" transform="rotate(-8 448 572)"/>
</svg>
<svg style="left:11.5px;top:735px" width="27" height="25" viewBox="0 0 27 25">
<path d="M0.2 2.3 L11 0.9 V11.7 H0.2 Z M12.1 0.75 L26.8 -1.2 V11.7 H12.1 Z M0.2 12.8 H11 V23.5 L0.2 22.2 Z M12.1 12.8 H26.8 V25.1 L12.1 23.6 Z" fill="#fff"/>
</svg>
<svg style="left:65px;top:731.5px" width="31" height="31" viewBox="0 0 31 31">
<path d="M15.5 27.5 C9 27.5 5 22.5 5 17 C5 10.5 9.8 6 15.8 6 C21.8 6 26 10.3 26 16.8 V18.3 H10.5 C11 21.3 13 23.2 16 23.2 C18.3 23.2 20 22.3 21 20.8 H25.5 C24 25 20.3 27.5 15.5 27.5 Z M10.6 14.6 H21 C20.6 11.8 18.6 10 15.9 10 C13.2 10 11.2 11.8 10.6 14.6 Z" fill="#3ab4ea" stroke="#1a6db5" stroke-width="0.9"/>
<path d="M3.5 28 C0 24 6 13 14 7 C21 2 28 -0.5 30 1.8 C31.5 3.5 29.5 8 26.5 11" fill="none" stroke="#e8c230" stroke-width="2.6"/>
<path d="M3.5 28 C5.5 30 10 29 14 27" fill="none" stroke="#e8c230" stroke-width="2.2"/>
</svg>
<div class="a" style="left:113.60px;top:728.70px;width:58.60px;height:39.30px;background:#8592a8;border:1px solid #a9b3c3;box-sizing:border-box;"></div>
<svg style="left:126px;top:733px" width="34" height="30" viewBox="0 0 34 30">
<path d="M1 3 H11 L13 5 H33 V26 H1 Z" fill="#e9b852"/>
<rect x="1" y="5" width="32" height="21" fill="#f6dc8f"/>
<rect x="2" y="2" width="4" height="2.5" fill="#3aa43a"/>
<rect x="15" y="3" width="4" height="3" fill="#c0502a"/>
<path d="M20 4.5 H33 V8 H20 Z" fill="#fbeab5" stroke="#d8a94a" stroke-width="0.6"/>
<circle cx="27" cy="6" r="1.6" fill="#4a9ad0"/>
<path d="M6.5 27 V16.5 H27 V27 H21 V21.5 H12.5 V27 Z" fill="#7cc4ee" stroke="#3b8fd0" stroke-width="0.9"/>
</svg>
<svg style="left:189.5px;top:733px" width="31" height="30" viewBox="0 0 31 30">
<rect x="0" y="0" width="31" height="30" fill="#0b8a1e"/>
<path d="M8 8.5 L23 7.5 L24 26 L9 24.5 Z" fill="#fff"/>
<path d="M12 8 C12 3 14 2.5 16 2.5 C18 2.5 19.8 3.5 19.8 7.8" fill="none" stroke="#fff" stroke-width="1.4"/>
<path d="M10.5 12.5 H15 V16.5 H10.5 Z M16 12.3 H20.8 V16.5 H16 Z M10.5 17.5 H15 V21.5 H10.5 Z M16 17.5 H20.8 V21.8 H16 Z" fill="#0b8a1e"/>
</svg>
<svg style="left:251px;top:732px" width="32" height="32" viewBox="0 0 32 32">
<rect x="0" y="0" width="32" height="32" fill="#2a4f9a"/>
<rect x="0" y="0" width="32" height="3" fill="#4c73bf"/>
<path d="M6 13 H14 M6 13 V24 H22" fill="none" stroke="#fff" stroke-width="1.5"/>
<path d="M2.5 24.5 H25.5 L23.5 27.5 H4.5 Z" fill="#fff"/>
<circle cx="21" cy="10.5" r="7.8" fill="#fff"/>
<circle cx="21" cy="10.5" r="6.2" fill="#2b7fbf"/>
<circle cx="18.5" cy="8" r="1.8" fill="#39c0c8"/><circle cx="23" cy="11" r="2" fill="#39c0c8"/><circle cx="19" cy="13.5" r="1.5" fill="#39c0c8"/>
<path d="M14.5 14 L11.5 18.5 L17 16.5" fill="#fff"/>
</svg>
<svg style="left:314px;top:736px" width="31" height="23" viewBox="0 0 31 23">
<path d="M4 1 H30 L29 18 C28 21 26 22 23 22 H1 L2 5 C2.5 2 3 1 4 1 Z" fill="#eef2f7"/>
<path d="M6 3.5 H27.5 V15.5 C27.5 17.5 26.5 19 24 19 H4.5 L5 5.5 Z" fill="#1f4f9a"/>
<path d="M8.5 7 H16.5 V12.5 H11 L9 14.5 V12.5 H8.5 Z" fill="#cfd8e6"/>
<path d="M15 6 H25 V11.5 H23.5 V13.5 L21.5 11.5 H15 Z" fill="#e8edf4"/>
</svg>
<div class="a" style="left:362.00px;top:728.70px;width:58.00px;height:39.30px;background:#7e8ba0;border:1px solid #8f9bb0;box-sizing:border-box;"></div>
<svg style="left:375.5px;top:733.5px" width="30" height="30" viewBox="0 0 30 30">
<circle cx="15" cy="15" r="14.5" fill="#1f9a46"/>
<path d="M15 15 L2.44 7.75 A14.5 14.5 0 0 1 27.56 7.75 Z" fill="#dd3b2c"/>
<path d="M15 15 L27.56 7.75 A14.5 14.5 0 0 1 15 29.5 Z" fill="#f7c72e"/>
<circle cx="15" cy="15" r="6.6" fill="#fff"/>
<circle cx="15" cy="15" r="5.1" fill="#3d80d8"/>
</svg>
<div class="a" style="left:423.80px;top:728.70px;width:50.50px;height:39.30px;background:#8a96aa;border:1px solid #c6cdd8;box-sizing:border-box;"></div>
<div class="a" style="left:475.50px;top:729.00px;width:1.10px;height:39.00px;background:#aab4c4;"></div>
<div class="a" style="left:481.00px;top:729.00px;width:1.10px;height:39.00px;background:#aab4c4;"></div>
<svg style="left:433.5px;top:733px" width="31" height="30" viewBox="0 0 31 30">
<rect x="14" y="3.5" width="16" height="22.5" fill="#fff" stroke="#2b579a" stroke-width="1"/>
<path d="M17 7.5H28M17 10.5H28M17 13.5H28M17 16.5H28M17 19.5H28M17 22.5H28" stroke="#2b579a" stroke-width="1.1"/>
<path d="M0 3.5 L17.5 0 V30 L0 26.5 Z" fill="#2b579a"/>
<text x="3" y="19.5" font-size="11" font-weight="bold" fill="#fff" font-family="Liberation Sans">W</text>
</svg>
<div class="a" style="left:486.00px;top:728.70px;width:58.10px;height:39.30px;background:#7e8ba0;border:1px solid #8f9bb0;box-sizing:border-box;"></div>
<svg style="left:499.5px;top:733px" width="32" height="31" viewBox="0 0 32 31">
<rect x="16" y="8" width="14" height="11" fill="#fff"/>
<path d="M17 9.5 L23 14.5 L30 7.5" fill="none" stroke="#0f6cbd" stroke-width="1.8"/>
<path d="M15 20 H32 V31 H15 Z" fill="#e2aa6a"/>
<path d="M15 20 L23.5 26 L32 20" fill="none" stroke="#f4d3a8" stroke-width="1.2"/>
<path d="M0 3.5 L17.5 0 V30 L0 26.5 Z" fill="#0f6cbd"/>
<ellipse cx="8.7" cy="15.2" rx="4.7" ry="5.9" fill="none" stroke="#fff" stroke-width="2.6"/>
</svg>
<div class="a" style="left:548.00px;top:728.70px;width:50.00px;height:39.30px;background:#7e8ba0;border:1px solid #8f9bb0;box-sizing:border-box;"></div>
<div class="a" style="left:599.70px;top:729.00px;width:1.10px;height:39.00px;background:#aab4c4;"></div>
<div class="a" style="left:604.80px;top:729.00px;width:1.10px;height:39.00px;background:#aab4c4;"></div>
<svg style="left:557.5px;top:733px" width="31" height="30" viewBox="0 0 31 30">
<rect x="14" y="3.5" width="16" height="22.5" fill="#fff" stroke="#1e7145" stroke-width="1"/>
<path d="M17 7.5H28M17 10.5H28M17 13.5H28M17 16.5H28M17 19.5H28M17 22.5H28M22.5 4V26" stroke="#1e7145" stroke-width="1"/>
<path d="M0 3.5 L17.5 0 V30 L0 26.5 Z" fill="#1e7145"/>
<text x="3.5" y="20" font-size="12" font-weight="bold" fill="#fff" font-family="Liberation Sans">X</text>
</svg>
<svg style="left:1142.5px;top:739.5px" width="30" height="18" viewBox="0 0 30 18">
<rect x="0.75" y="0.75" width="28.5" height="16.5" rx="1.5" fill="none" stroke="#fff" stroke-width="1.5"/>
<path d="M4 4.5H26M4 8H26M4 11.5H26" stroke="#fff" stroke-width="1.6" stroke-dasharray="1.6 1.2"/>
<path d="M8 14.5H22" stroke="#fff" stroke-width="1.6"/>
</svg>
<svg style="left:1185.5px;top:747px" width="9" height="5" viewBox="0 0 9 5"><path d="M0 5H9L4.5 0Z" fill="#fff"/></svg>
<svg style="left:1207.5px;top:742px" width="16" height="15" viewBox="0 0 16 15">
<path d="M1.5 0V4M4.5 0V4" stroke="#fff" stroke-width="1.3"/>
<path d="M0 4H6V8C6 10 4.5 11 3 11C1.5 11 0 10 0 8Z" fill="#fff"/>
<path d="M3 11V15" stroke="#fff" stroke-width="1.2"/>
<rect x="9.2" y="1.7" width="5.8" height="12.8" fill="none" stroke="#fff" stroke-width="1.2"/>
<rect x="10.8" y="0" width="2.6" height="1.5" fill="#fff"/>
<rect x="10.4" y="7" width="3.4" height="6.5" fill="#fff"/>
</svg>
<svg style="left:1233px;top:743px" width="13" height="14" viewBox="0 0 13 14">
<path d="M0 4.5H3L7 1V13L3 9.5H0Z" fill="#fff"/>
<path d="M9 4C10 5.2 10 8.8 9 10M11 2.5C12.8 4.5 12.8 9.5 11 11.5" fill="none" stroke="#fff" stroke-width="1"/>
</svg>
<svg style="left:1255px;top:743px" width="16" height="14" viewBox="0 0 16 14">
<rect x="0" y="11" width="2" height="3" fill="#fff"/><rect x="3.5" y="9" width="2" height="5" fill="#fff"/>
<rect x="7" y="6.5" width="2" height="7.5" fill="#fff"/><rect x="10.5" y="3.5" width="2" height="10.5" fill="#fff"/>
<rect x="14" y="0" width="2" height="14" fill="#fff"/>
</svg>
<div class="t" style="left:1305.00px;top:733.99px;font-size:13.48px;color:#fff;transform:scaleX(0.7827);-webkit-text-stroke:0.25px #fff;">07:21</div>
<div class="t" style="left:1288.00px;top:750.99px;font-size:13.48px;color:#fff;transform:scaleX(0.8702);-webkit-text-stroke:0.25px #fff;">29/10/2014</div>
</div></body></html>
